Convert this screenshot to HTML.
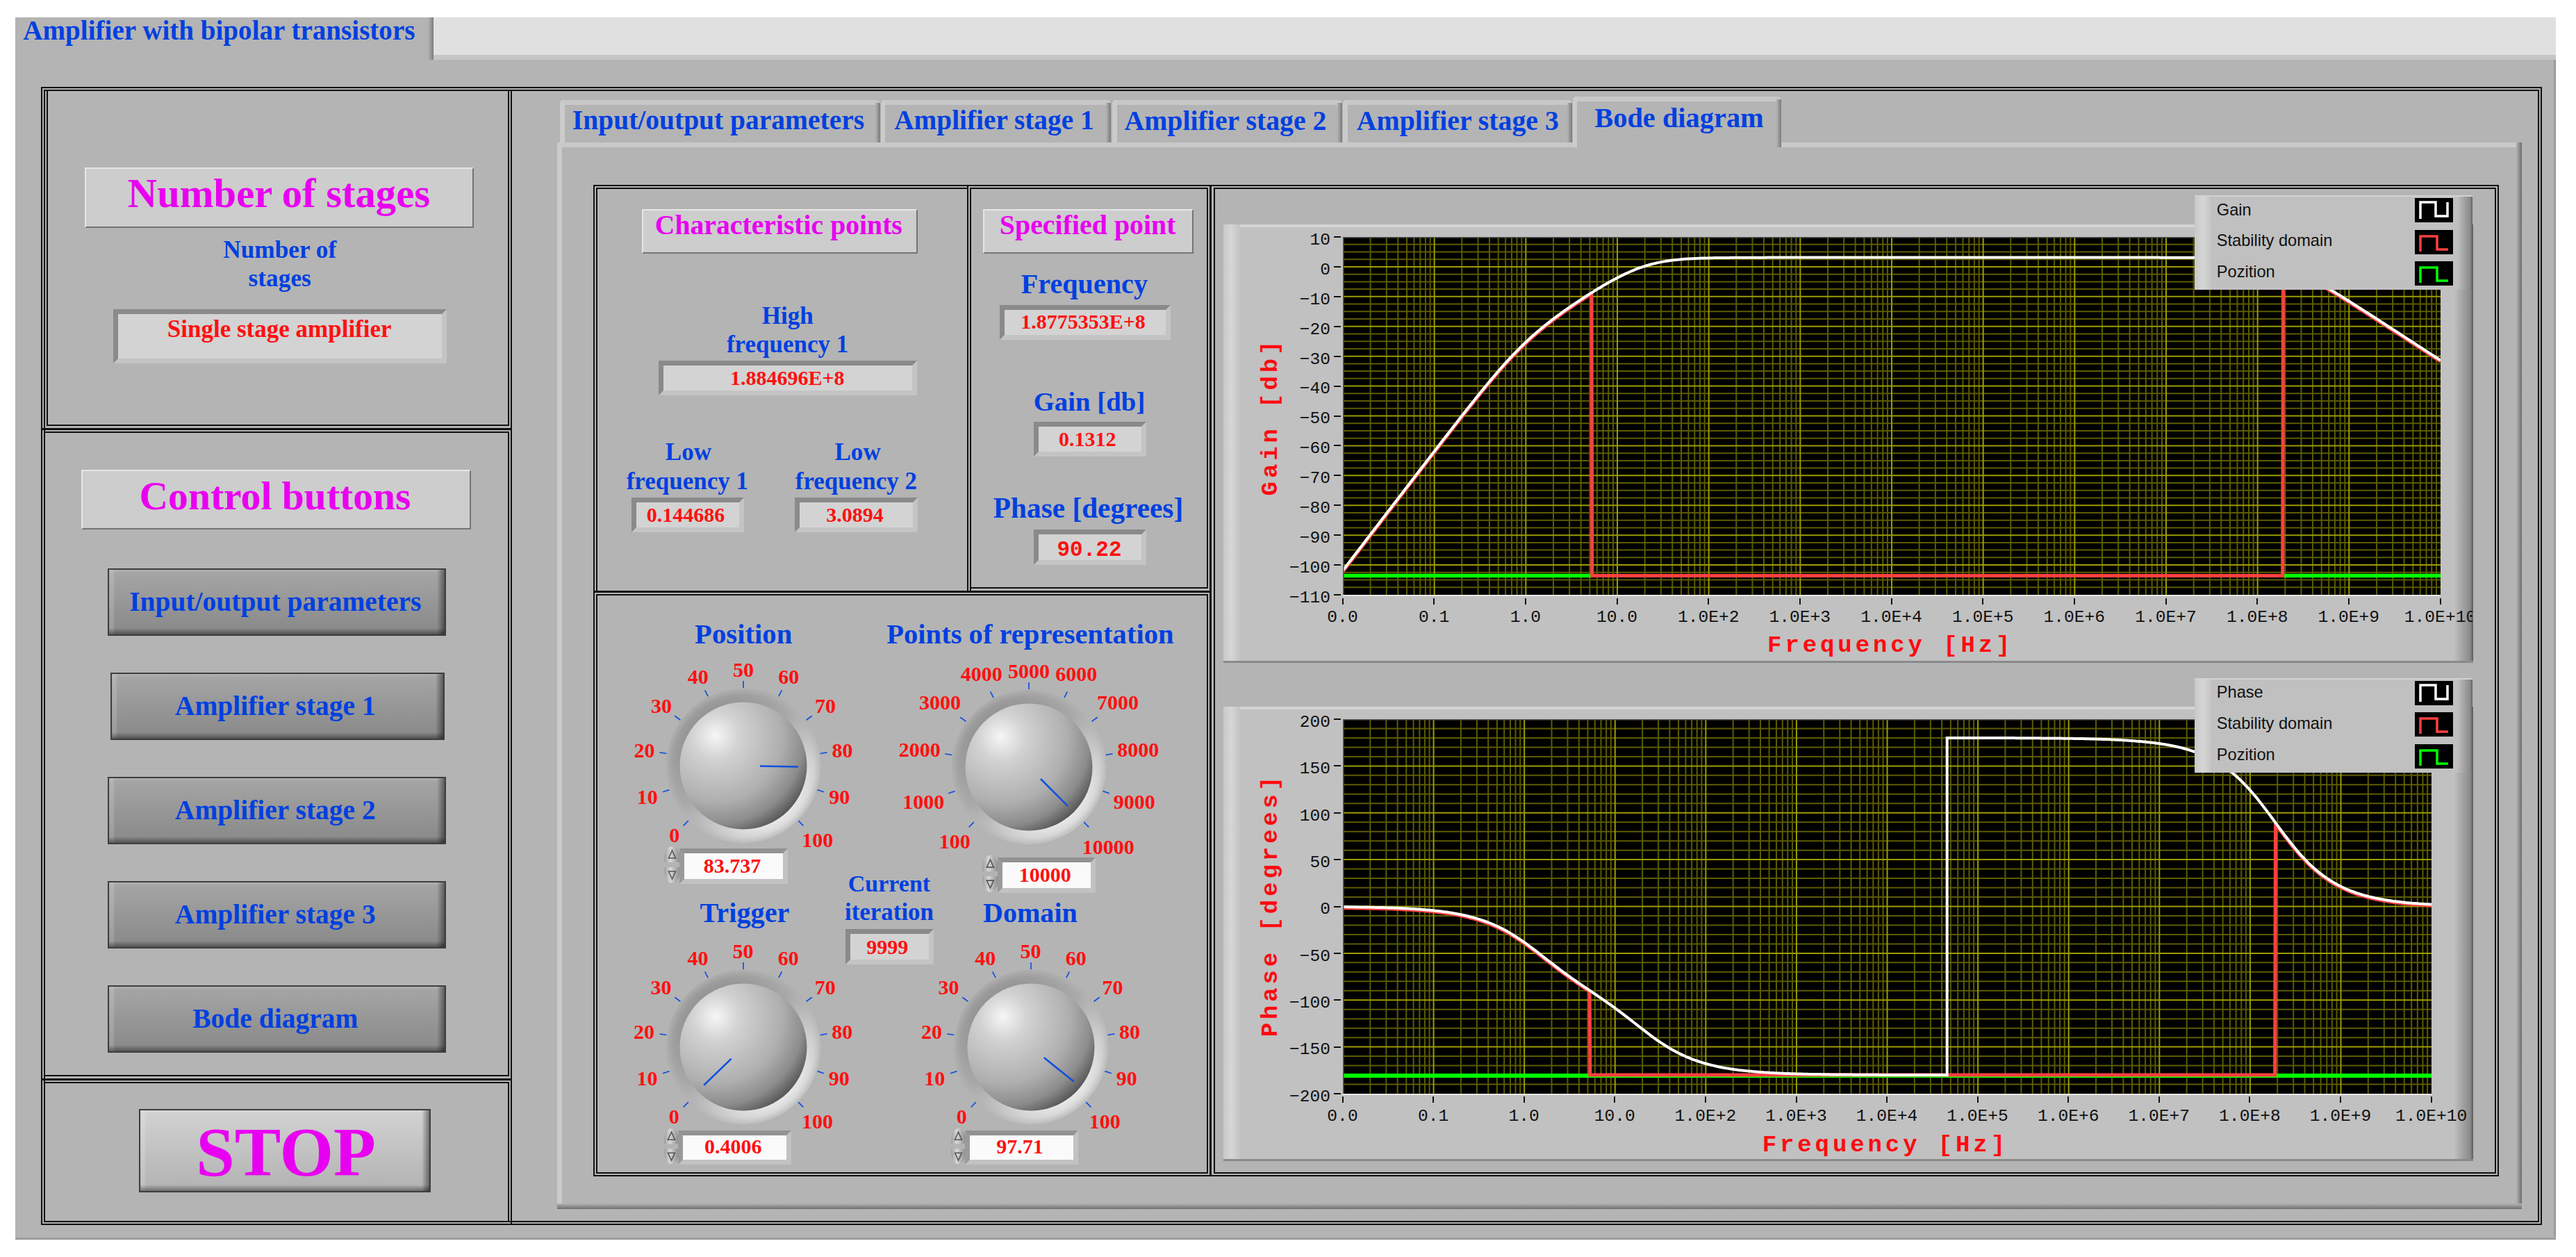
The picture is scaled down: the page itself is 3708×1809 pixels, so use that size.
<!DOCTYPE html><html><head><meta charset="utf-8"><style>html,body{margin:0;padding:0;background:#fff;}#root{position:relative;width:3708px;height:1809px;overflow:hidden;background:#fff;}</style></head><body><div id="root">
<div style="position:absolute;left:22.0px;top:25.0px;width:3657.0px;height:1759.0px;background:#b4b4b4"></div>
<div style="position:absolute;left:3675.0px;top:80.0px;width:4.0px;height:1704.0px;background:linear-gradient(to right,#b4b4b4,#8c8c8c)"></div>
<div style="position:absolute;left:22.0px;top:1780.0px;width:3657.0px;height:4.0px;background:linear-gradient(to bottom,#b4b4b4,#8c8c8c)"></div>
<div style="position:absolute;left:624.0px;top:25.0px;width:3055.0px;height:54.0px;background:#e0e0e0"></div>
<div style="position:absolute;left:624.0px;top:79.0px;width:3055.0px;height:7.0px;background:#c6c6c6"></div>
<div style="position:absolute;left:616.0px;top:25.0px;width:8.0px;height:61.0px;background:linear-gradient(to right,#b4b4b4,#7c7c7c)"></div>
<div style="position:absolute;left:-684.6px;top:22.0px;width:2000px;height:43.3px;line-height:43.3px;text-align:center;white-space:nowrap;font-family:'Liberation Serif', serif;font-weight:bold;font-size:39.1px;color:#0040e0;">Amplifier with bipolar transistors</div>
<div style="position:absolute;left:59.0px;top:125.0px;width:3600.0px;height:2.0px;background:#111"></div>
<div style="position:absolute;left:63.0px;top:129.0px;width:3592.0px;height:2.0px;background:#111"></div>
<div style="position:absolute;left:59.0px;top:1761.0px;width:3600.0px;height:2.0px;background:#111"></div>
<div style="position:absolute;left:63.0px;top:1757.0px;width:3592.0px;height:2.0px;background:#111"></div>
<div style="position:absolute;left:59.0px;top:125.0px;width:2.0px;height:1638.0px;background:#111"></div>
<div style="position:absolute;left:63.0px;top:129.0px;width:2.0px;height:1630.0px;background:#111"></div>
<div style="position:absolute;left:3657.0px;top:125.0px;width:2.0px;height:1638.0px;background:#111"></div>
<div style="position:absolute;left:3653.0px;top:129.0px;width:2.0px;height:1630.0px;background:#111"></div>
<div style="position:absolute;left:67.0px;top:129.0px;width:2.0px;height:484.0px;background:#111"></div>
<div style="position:absolute;left:731.0px;top:129.0px;width:2.0px;height:484.0px;background:#111"></div>
<div style="position:absolute;left:731.0px;top:621.0px;width:2.0px;height:928.0px;background:#111"></div>
<div style="position:absolute;left:731.0px;top:1557.0px;width:2.0px;height:202.0px;background:#111"></div>
<div style="position:absolute;left:735.0px;top:129.0px;width:2.0px;height:1634.0px;background:#111"></div>
<div style="position:absolute;left:67.0px;top:611.0px;width:666.0px;height:2.0px;background:#111"></div>
<div style="position:absolute;left:59.0px;top:615.5px;width:678.0px;height:3.0px;background:#111"></div>
<div style="position:absolute;left:63.0px;top:621.0px;width:670.0px;height:2.0px;background:#111"></div>
<div style="position:absolute;left:63.0px;top:1547.0px;width:670.0px;height:2.0px;background:#111"></div>
<div style="position:absolute;left:59.0px;top:1551.5px;width:678.0px;height:3.0px;background:#111"></div>
<div style="position:absolute;left:63.0px;top:1557.0px;width:670.0px;height:2.0px;background:#111"></div>
<div style="position:absolute;left:122.0px;top:240.5px;width:560.0px;height:87.5px;background:#cdcdcd;border-top:2px solid #e6e6e6;border-left:2px solid #e6e6e6;border-bottom:2px solid #747474;border-right:2px solid #747474;box-sizing:border-box"></div>
<div style="position:absolute;left:-598.6px;top:246.8px;width:2000px;height:64.9px;line-height:64.9px;text-align:center;white-space:nowrap;font-family:'Liberation Serif', serif;font-weight:bold;font-size:58.6px;color:#e800f0;">Number of stages</div>
<div style="position:absolute;left:-597.3px;top:339.9px;width:2000px;height:39.1px;line-height:39.1px;text-align:center;white-space:nowrap;font-family:'Liberation Serif', serif;font-weight:bold;font-size:35.3px;color:#0040e0;">Number of</div>
<div style="position:absolute;left:-597.3px;top:380.8px;width:2000px;height:39.1px;line-height:39.1px;text-align:center;white-space:nowrap;font-family:'Liberation Serif', serif;font-weight:bold;font-size:35.3px;color:#0040e0;">stages</div>
<div style="position:absolute;left:163.0px;top:445.0px;width:480.0px;height:77.5px;box-sizing:border-box;border-style:solid;border-width:7px;border-color:#8a8a8a #c4c4c4 #c4c4c4 #8a8a8a;background:#d3d3d3"></div>
<div style="position:absolute;left:-597.8px;top:455.1px;width:2000px;height:38.8px;line-height:38.8px;text-align:center;white-space:nowrap;font-family:'Liberation Serif', serif;font-weight:bold;font-size:35.0px;color:#ff1010;">Single stage amplifier</div>
<div style="position:absolute;left:117.0px;top:676.0px;width:561.0px;height:86.0px;background:#cdcdcd;border-top:2px solid #e6e6e6;border-left:2px solid #e6e6e6;border-bottom:2px solid #747474;border-right:2px solid #747474;box-sizing:border-box"></div>
<div style="position:absolute;left:-604.0px;top:681.6px;width:2000px;height:63.8px;line-height:63.8px;text-align:center;white-space:nowrap;font-family:'Liberation Serif', serif;font-weight:bold;font-size:57.6px;color:#e800f0;">Control buttons</div>
<div style="position:absolute;left:155.0px;top:818.0px;width:487.0px;height:96.5px;box-sizing:border-box;border:2px solid #3e3e3e;background:linear-gradient(to bottom,#a6a6a6,#888888);overflow:hidden"><div style="position:absolute;left:0;top:0;right:0;height:5px;background:linear-gradient(to bottom,rgba(255,255,255,0.12),rgba(255,255,255,0))"></div><div style="position:absolute;left:0;top:0;bottom:0;width:9px;background:linear-gradient(to right,rgba(255,255,255,0.10),rgba(255,255,255,0.18) 50%,rgba(255,255,255,0))"></div><div style="position:absolute;right:0;top:0;bottom:0;width:11px;background:linear-gradient(to right,rgba(0,0,0,0),rgba(0,0,0,0.45))"></div><div style="position:absolute;left:0;right:0;bottom:0;height:9px;background:linear-gradient(to bottom,rgba(0,0,0,0),rgba(0,0,0,0.4))"></div></div>
<div style="position:absolute;left:-603.7px;top:845.3px;width:2000px;height:43.7px;line-height:43.7px;text-align:center;white-space:nowrap;font-family:'Liberation Serif', serif;font-weight:bold;font-size:39.5px;color:#0040e0;">Input/output parameters</div>
<div style="position:absolute;left:159.0px;top:968.0px;width:480.5px;height:96.5px;box-sizing:border-box;border:2px solid #3e3e3e;background:linear-gradient(to bottom,#a6a6a6,#888888);overflow:hidden"><div style="position:absolute;left:0;top:0;right:0;height:5px;background:linear-gradient(to bottom,rgba(255,255,255,0.12),rgba(255,255,255,0))"></div><div style="position:absolute;left:0;top:0;bottom:0;width:9px;background:linear-gradient(to right,rgba(255,255,255,0.10),rgba(255,255,255,0.18) 50%,rgba(255,255,255,0))"></div><div style="position:absolute;right:0;top:0;bottom:0;width:11px;background:linear-gradient(to right,rgba(0,0,0,0),rgba(0,0,0,0.45))"></div><div style="position:absolute;left:0;right:0;bottom:0;height:9px;background:linear-gradient(to bottom,rgba(0,0,0,0),rgba(0,0,0,0.4))"></div></div>
<div style="position:absolute;left:-603.7px;top:995.3px;width:2000px;height:43.7px;line-height:43.7px;text-align:center;white-space:nowrap;font-family:'Liberation Serif', serif;font-weight:bold;font-size:39.5px;color:#0040e0;">Amplifier stage 1</div>
<div style="position:absolute;left:155.0px;top:1118.0px;width:487.0px;height:96.5px;box-sizing:border-box;border:2px solid #3e3e3e;background:linear-gradient(to bottom,#a6a6a6,#888888);overflow:hidden"><div style="position:absolute;left:0;top:0;right:0;height:5px;background:linear-gradient(to bottom,rgba(255,255,255,0.12),rgba(255,255,255,0))"></div><div style="position:absolute;left:0;top:0;bottom:0;width:9px;background:linear-gradient(to right,rgba(255,255,255,0.10),rgba(255,255,255,0.18) 50%,rgba(255,255,255,0))"></div><div style="position:absolute;right:0;top:0;bottom:0;width:11px;background:linear-gradient(to right,rgba(0,0,0,0),rgba(0,0,0,0.45))"></div><div style="position:absolute;left:0;right:0;bottom:0;height:9px;background:linear-gradient(to bottom,rgba(0,0,0,0),rgba(0,0,0,0.4))"></div></div>
<div style="position:absolute;left:-603.7px;top:1145.3px;width:2000px;height:43.7px;line-height:43.7px;text-align:center;white-space:nowrap;font-family:'Liberation Serif', serif;font-weight:bold;font-size:39.5px;color:#0040e0;">Amplifier stage 2</div>
<div style="position:absolute;left:155.0px;top:1268.0px;width:487.0px;height:96.5px;box-sizing:border-box;border:2px solid #3e3e3e;background:linear-gradient(to bottom,#a6a6a6,#888888);overflow:hidden"><div style="position:absolute;left:0;top:0;right:0;height:5px;background:linear-gradient(to bottom,rgba(255,255,255,0.12),rgba(255,255,255,0))"></div><div style="position:absolute;left:0;top:0;bottom:0;width:9px;background:linear-gradient(to right,rgba(255,255,255,0.10),rgba(255,255,255,0.18) 50%,rgba(255,255,255,0))"></div><div style="position:absolute;right:0;top:0;bottom:0;width:11px;background:linear-gradient(to right,rgba(0,0,0,0),rgba(0,0,0,0.45))"></div><div style="position:absolute;left:0;right:0;bottom:0;height:9px;background:linear-gradient(to bottom,rgba(0,0,0,0),rgba(0,0,0,0.4))"></div></div>
<div style="position:absolute;left:-603.7px;top:1295.3px;width:2000px;height:43.7px;line-height:43.7px;text-align:center;white-space:nowrap;font-family:'Liberation Serif', serif;font-weight:bold;font-size:39.5px;color:#0040e0;">Amplifier stage 3</div>
<div style="position:absolute;left:155.0px;top:1418.0px;width:487.0px;height:96.5px;box-sizing:border-box;border:2px solid #3e3e3e;background:linear-gradient(to bottom,#a6a6a6,#888888);overflow:hidden"><div style="position:absolute;left:0;top:0;right:0;height:5px;background:linear-gradient(to bottom,rgba(255,255,255,0.12),rgba(255,255,255,0))"></div><div style="position:absolute;left:0;top:0;bottom:0;width:9px;background:linear-gradient(to right,rgba(255,255,255,0.10),rgba(255,255,255,0.18) 50%,rgba(255,255,255,0))"></div><div style="position:absolute;right:0;top:0;bottom:0;width:11px;background:linear-gradient(to right,rgba(0,0,0,0),rgba(0,0,0,0.45))"></div><div style="position:absolute;left:0;right:0;bottom:0;height:9px;background:linear-gradient(to bottom,rgba(0,0,0,0),rgba(0,0,0,0.4))"></div></div>
<div style="position:absolute;left:-603.7px;top:1445.3px;width:2000px;height:43.7px;line-height:43.7px;text-align:center;white-space:nowrap;font-family:'Liberation Serif', serif;font-weight:bold;font-size:39.5px;color:#0040e0;">Bode diagram</div>
<div style="position:absolute;left:200.0px;top:1595.5px;width:420.0px;height:120.5px;box-sizing:border-box;border:2px solid #3e3e3e;background:linear-gradient(to bottom,#d2d2d2,#b2b2b2);overflow:hidden"><div style="position:absolute;left:0;top:0;right:0;height:5px;background:linear-gradient(to bottom,rgba(255,255,255,0.12),rgba(255,255,255,0))"></div><div style="position:absolute;left:0;top:0;bottom:0;width:9px;background:linear-gradient(to right,rgba(255,255,255,0.10),rgba(255,255,255,0.18) 50%,rgba(255,255,255,0))"></div><div style="position:absolute;right:0;top:0;bottom:0;width:11px;background:linear-gradient(to right,rgba(0,0,0,0),rgba(0,0,0,0.45))"></div><div style="position:absolute;left:0;right:0;bottom:0;height:9px;background:linear-gradient(to bottom,rgba(0,0,0,0),rgba(0,0,0,0.4))"></div></div>
<div style="position:absolute;left:-588.4px;top:1602.6px;width:2000px;height:110.5px;line-height:110.5px;text-align:center;white-space:nowrap;font-family:'Liberation Serif', serif;font-weight:bold;font-size:99.8px;color:#e800f0;">STOP</div>
<div style="position:absolute;left:802.0px;top:205.0px;width:828.0px;height:1534.0px;background:#b4b4b4"></div>
<div style="position:absolute;left:802.0px;top:205.0px;width:2828.0px;height:1534.0px;background:#b4b4b4"></div>
<div style="position:absolute;left:802.0px;top:205.0px;width:2828.0px;height:7.0px;background:#c8c8c8"></div>
<div style="position:absolute;left:802.0px;top:205.0px;width:7.0px;height:1534.0px;background:#cacaca"></div>
<div style="position:absolute;left:3622.0px;top:205.0px;width:8.0px;height:1534.0px;background:linear-gradient(to right,#b4b4b4,#6e6e6e)"></div>
<div style="position:absolute;left:802.0px;top:1731.5px;width:2828.0px;height:8.0px;background:linear-gradient(to bottom,#b4b4b4,#6e6e6e)"></div>
<div style="position:absolute;left:806.0px;top:144.0px;width:461.0px;height:61.0px;background:#b4b4b4;border-radius:5px 5px 0 0;overflow:hidden"><div style="position:absolute;left:0;top:0;right:0;height:6.5px;background:#c8c8c8"></div><div style="position:absolute;left:0;top:0;bottom:0;width:6.5px;background:#cbcbcb"></div><div style="position:absolute;right:0;top:4px;bottom:0;width:7px;background:linear-gradient(to right,#b4b4b4,#7a7a7a)"></div></div>
<div style="position:absolute;left:1267.6px;top:144.0px;width:331.9px;height:61.0px;background:#b4b4b4;border-radius:5px 5px 0 0;overflow:hidden"><div style="position:absolute;left:0;top:0;right:0;height:6.5px;background:#c8c8c8"></div><div style="position:absolute;left:0;top:0;bottom:0;width:6.5px;background:#cbcbcb"></div><div style="position:absolute;right:0;top:4px;bottom:0;width:7px;background:linear-gradient(to right,#b4b4b4,#7a7a7a)"></div></div>
<div style="position:absolute;left:1601.0px;top:144.0px;width:330.5px;height:61.0px;background:#b4b4b4;border-radius:5px 5px 0 0;overflow:hidden"><div style="position:absolute;left:0;top:0;right:0;height:6.5px;background:#c8c8c8"></div><div style="position:absolute;left:0;top:0;bottom:0;width:6.5px;background:#cbcbcb"></div><div style="position:absolute;right:0;top:4px;bottom:0;width:7px;background:linear-gradient(to right,#b4b4b4,#7a7a7a)"></div></div>
<div style="position:absolute;left:1933.0px;top:144.0px;width:329.5px;height:61.0px;background:#b4b4b4;border-radius:5px 5px 0 0;overflow:hidden"><div style="position:absolute;left:0;top:0;right:0;height:6.5px;background:#c8c8c8"></div><div style="position:absolute;left:0;top:0;bottom:0;width:6.5px;background:#cbcbcb"></div><div style="position:absolute;right:0;top:4px;bottom:0;width:7px;background:linear-gradient(to right,#b4b4b4,#7a7a7a)"></div></div>
<div style="position:absolute;left:2263.5px;top:139.0px;width:300.5px;height:73.0px;background:#b4b4b4;border-radius:5px 5px 0 0;overflow:hidden"><div style="position:absolute;left:0;top:0;right:0;height:6.5px;background:#c8c8c8"></div><div style="position:absolute;left:0;top:0;bottom:0;width:6.5px;background:#cbcbcb"></div><div style="position:absolute;right:0;top:4px;bottom:0;width:7px;background:linear-gradient(to right,#b4b4b4,#7a7a7a)"></div></div>
<div style="position:absolute;left:2270.0px;top:205.0px;width:287.0px;height:8.0px;background:#b4b4b4"></div>
<div style="position:absolute;left:34.0px;top:151.8px;width:2000px;height:43.7px;line-height:43.7px;text-align:center;white-space:nowrap;font-family:'Liberation Serif', serif;font-weight:bold;font-size:39.5px;color:#0040e0;">Input/output parameters</div>
<div style="position:absolute;left:430.9px;top:152.0px;width:2000px;height:43.5px;line-height:43.5px;text-align:center;white-space:nowrap;font-family:'Liberation Serif', serif;font-weight:bold;font-size:39.3px;color:#0040e0;">Amplifier stage 1</div>
<div style="position:absolute;left:764.0px;top:152.0px;width:2000px;height:44.1px;line-height:44.1px;text-align:center;white-space:nowrap;font-family:'Liberation Serif', serif;font-weight:bold;font-size:39.8px;color:#0040e0;">Amplifier stage 2</div>
<div style="position:absolute;left:1098.3px;top:152.0px;width:2000px;height:44.1px;line-height:44.1px;text-align:center;white-space:nowrap;font-family:'Liberation Serif', serif;font-weight:bold;font-size:39.8px;color:#0040e0;">Amplifier stage 3</div>
<div style="position:absolute;left:1417.0px;top:148.0px;width:2000px;height:44.7px;line-height:44.7px;text-align:center;white-space:nowrap;font-family:'Liberation Serif', serif;font-weight:bold;font-size:40.4px;color:#0040e0;">Bode diagram</div>
<div style="position:absolute;left:854.0px;top:265.5px;width:2742.5px;height:2.0px;background:#111"></div>
<div style="position:absolute;left:858.0px;top:270.0px;width:534.0px;height:2.0px;background:#111"></div>
<div style="position:absolute;left:1396.0px;top:270.0px;width:342.0px;height:2.0px;background:#111"></div>
<div style="position:absolute;left:1746.5px;top:270.0px;width:1846.0px;height:2.0px;background:#111"></div>
<div style="position:absolute;left:854.0px;top:265.5px;width:2.0px;height:1427.5px;background:#111"></div>
<div style="position:absolute;left:858.0px;top:270.0px;width:2.0px;height:581.0px;background:#111"></div>
<div style="position:absolute;left:858.0px;top:855.0px;width:2.0px;height:834.0px;background:#111"></div>
<div style="position:absolute;left:1392.0px;top:265.5px;width:2.0px;height:585.5px;background:#111"></div>
<div style="position:absolute;left:1396.0px;top:270.0px;width:2.0px;height:581.0px;background:#111"></div>
<div style="position:absolute;left:1736.5px;top:270.0px;width:2.0px;height:577.0px;background:#111"></div>
<div style="position:absolute;left:1736.5px;top:855.0px;width:2.0px;height:834.0px;background:#111"></div>
<div style="position:absolute;left:1741.0px;top:265.5px;width:3.0px;height:1427.5px;background:#111"></div>
<div style="position:absolute;left:1746.5px;top:270.0px;width:2.0px;height:1419.0px;background:#111"></div>
<div style="position:absolute;left:3590.5px;top:270.0px;width:2.0px;height:1419.0px;background:#111"></div>
<div style="position:absolute;left:3594.5px;top:265.5px;width:2.0px;height:1427.5px;background:#111"></div>
<div style="position:absolute;left:1396.0px;top:845.0px;width:342.0px;height:2.0px;background:#111"></div>
<div style="position:absolute;left:854.0px;top:849.5px;width:890.0px;height:3.0px;background:#111"></div>
<div style="position:absolute;left:858.0px;top:855.0px;width:880.0px;height:2.0px;background:#111"></div>
<div style="position:absolute;left:858.0px;top:1687.0px;width:880.0px;height:2.0px;background:#111"></div>
<div style="position:absolute;left:1746.5px;top:1687.0px;width:1846.0px;height:2.0px;background:#111"></div>
<div style="position:absolute;left:854.0px;top:1691.0px;width:2742.5px;height:2.0px;background:#111"></div>
<div style="position:absolute;left:924.0px;top:300.7px;width:397.0px;height:64.0px;background:#cdcdcd;border-top:2px solid #e6e6e6;border-left:2px solid #e6e6e6;border-bottom:2px solid #747474;border-right:2px solid #747474;box-sizing:border-box"></div>
<div style="position:absolute;left:120.8px;top:302.2px;width:2000px;height:44.0px;line-height:44.0px;text-align:center;white-space:nowrap;font-family:'Liberation Serif', serif;font-weight:bold;font-size:39.7px;color:#e800f0;">Characteristic points</div>
<div style="position:absolute;left:1415.0px;top:300.7px;width:303.0px;height:64.0px;background:#cdcdcd;border-top:2px solid #e6e6e6;border-left:2px solid #e6e6e6;border-bottom:2px solid #747474;border-right:2px solid #747474;box-sizing:border-box"></div>
<div style="position:absolute;left:565.7px;top:302.0px;width:2000px;height:44.2px;line-height:44.2px;text-align:center;white-space:nowrap;font-family:'Liberation Serif', serif;font-weight:bold;font-size:39.9px;color:#e800f0;">Specified point</div>
<div style="position:absolute;left:133.8px;top:435.7px;width:2000px;height:38.9px;line-height:38.9px;text-align:center;white-space:nowrap;font-family:'Liberation Serif', serif;font-weight:bold;font-size:35.1px;color:#0040e0;">High</div>
<div style="position:absolute;left:133.6px;top:477.3px;width:2000px;height:38.8px;line-height:38.8px;text-align:center;white-space:nowrap;font-family:'Liberation Serif', serif;font-weight:bold;font-size:35.0px;color:#0040e0;">frequency 1</div>
<div style="position:absolute;left:948.0px;top:519.0px;width:372.0px;height:50.0px;box-sizing:border-box;border-style:solid;border-width:7px;border-color:#8a8a8a #c4c4c4 #c4c4c4 #8a8a8a;background:#d3d3d3"></div>
<div style="position:absolute;left:133.3px;top:526.6px;width:2000px;height:33.2px;line-height:33.2px;text-align:center;white-space:nowrap;font-family:'Liberation Serif', serif;font-weight:bold;font-size:30.0px;color:#ff1010;">1.884696E+8</div>
<div style="position:absolute;left:-9.0px;top:632.3px;width:2000px;height:38.9px;line-height:38.9px;text-align:center;white-space:nowrap;font-family:'Liberation Serif', serif;font-weight:bold;font-size:35.1px;color:#0040e0;">Low</div>
<div style="position:absolute;left:-10.7px;top:673.6px;width:2000px;height:38.8px;line-height:38.8px;text-align:center;white-space:nowrap;font-family:'Liberation Serif', serif;font-weight:bold;font-size:35.0px;color:#0040e0;">frequency 1</div>
<div style="position:absolute;left:234.6px;top:632.3px;width:2000px;height:38.9px;line-height:38.9px;text-align:center;white-space:nowrap;font-family:'Liberation Serif', serif;font-weight:bold;font-size:35.1px;color:#0040e0;">Low</div>
<div style="position:absolute;left:232.4px;top:673.6px;width:2000px;height:38.8px;line-height:38.8px;text-align:center;white-space:nowrap;font-family:'Liberation Serif', serif;font-weight:bold;font-size:35.0px;color:#0040e0;">frequency 2</div>
<div style="position:absolute;left:908.7px;top:716.0px;width:162.3px;height:49.7px;box-sizing:border-box;border-style:solid;border-width:7px;border-color:#8a8a8a #c4c4c4 #c4c4c4 #8a8a8a;background:#d3d3d3"></div>
<div style="position:absolute;left:1144.0px;top:716.0px;width:176.5px;height:49.7px;box-sizing:border-box;border-style:solid;border-width:7px;border-color:#8a8a8a #c4c4c4 #c4c4c4 #8a8a8a;background:#d3d3d3"></div>
<div style="position:absolute;left:-13.1px;top:724.1px;width:2000px;height:33.2px;line-height:33.2px;text-align:center;white-space:nowrap;font-family:'Liberation Serif', serif;font-weight:bold;font-size:30.0px;color:#ff1010;">0.144686</div>
<div style="position:absolute;left:230.5px;top:724.1px;width:2000px;height:33.2px;line-height:33.2px;text-align:center;white-space:nowrap;font-family:'Liberation Serif', serif;font-weight:bold;font-size:30.0px;color:#ff1010;">3.0894</div>
<div style="position:absolute;left:560.9px;top:387.2px;width:2000px;height:44.5px;line-height:44.5px;text-align:center;white-space:nowrap;font-family:'Liberation Serif', serif;font-weight:bold;font-size:40.2px;color:#0040e0;">Frequency</div>
<div style="position:absolute;left:1439.0px;top:438.5px;width:246.0px;height:50.5px;box-sizing:border-box;border-style:solid;border-width:7px;border-color:#8a8a8a #c4c4c4 #c4c4c4 #8a8a8a;background:#d3d3d3"></div>
<div style="position:absolute;left:559.0px;top:446.0px;width:2000px;height:33.2px;line-height:33.2px;text-align:center;white-space:nowrap;font-family:'Liberation Serif', serif;font-weight:bold;font-size:30.0px;color:#ff1010;">1.8775353E+8</div>
<div style="position:absolute;left:568.0px;top:556.1px;width:2000px;height:43.0px;line-height:43.0px;text-align:center;white-space:nowrap;font-family:'Liberation Serif', serif;font-weight:bold;font-size:38.8px;color:#0040e0;">Gain [db]</div>
<div style="position:absolute;left:1487.6px;top:606.8px;width:162.0px;height:50.2px;box-sizing:border-box;border-style:solid;border-width:7px;border-color:#8a8a8a #c4c4c4 #c4c4c4 #8a8a8a;background:#d3d3d3"></div>
<div style="position:absolute;left:565.2px;top:614.5px;width:2000px;height:33.2px;line-height:33.2px;text-align:center;white-space:nowrap;font-family:'Liberation Serif', serif;font-weight:bold;font-size:30.0px;color:#ff1010;">0.1312</div>
<div style="position:absolute;left:566.5px;top:709.2px;width:2000px;height:45.7px;line-height:45.7px;text-align:center;white-space:nowrap;font-family:'Liberation Serif', serif;font-weight:bold;font-size:41.3px;color:#0040e0;">Phase [degrees]</div>
<div style="position:absolute;left:1488.0px;top:762.0px;width:162.0px;height:51.0px;box-sizing:border-box;border-style:solid;border-width:7px;border-color:#8a8a8a #c4c4c4 #c4c4c4 #8a8a8a;background:#d3d3d3"></div>
<div style="position:absolute;left:568.0px;top:773.6px;width:2000px;height:35.1px;line-height:35.1px;text-align:center;white-space:nowrap;font-family:'Liberation Mono', monospace;font-weight:bold;font-size:31.0px;color:#ff1010;">90.22</div>
<svg style="position:absolute;left:890.0px;top:922.0px" width="360" height="360" viewBox="-180.0 -180.0 360 360"><defs><linearGradient id="kr1" x1="0.15" y1="0.1" x2="0.85" y2="0.9"><stop offset="0" stop-color="#8a8a8a"/><stop offset="0.45" stop-color="#a6a6a6"/><stop offset="0.75" stop-color="#dadada"/><stop offset="1" stop-color="#fcfcfc"/></linearGradient><radialGradient id="kf1" cx="0.5" cy="0.5" r="0.5"><stop offset="0.80" stop-color="#b4b4b4" stop-opacity="0"/><stop offset="0.92" stop-color="#b4b4b4" stop-opacity="0.35"/><stop offset="1" stop-color="#b4b4b4" stop-opacity="0.85"/></radialGradient><radialGradient id="ks1" cx="0.3" cy="0.28" r="0.85" fx="0.28" fy="0.26"><stop offset="0" stop-color="#f6f6f6"/><stop offset="0.22" stop-color="#d2d2d2"/><stop offset="0.6" stop-color="#afafaf"/><stop offset="0.8" stop-color="#8c8c8c"/><stop offset="0.93" stop-color="#5a5a5a"/><stop offset="1" stop-color="#3c3c3c"/></radialGradient></defs><circle cx="0" cy="0" r="110.5" fill="url(#kr1)"/><circle cx="0" cy="0" r="110.5" fill="url(#kf1)"/><circle cx="0" cy="0" r="91.5" fill="url(#ks1)"/><line x1="-79.2" y1="79.2" x2="-86.3" y2="86.3" stroke="#1050e0" stroke-width="1.7"/><line x1="-106.5" y1="34.6" x2="-116.0" y2="37.7" stroke="#1050e0" stroke-width="1.7"/><line x1="-110.6" y1="-17.5" x2="-120.5" y2="-19.1" stroke="#1050e0" stroke-width="1.7"/><line x1="-90.6" y1="-65.8" x2="-98.7" y2="-71.7" stroke="#1050e0" stroke-width="1.7"/><line x1="-50.8" y1="-99.8" x2="-55.4" y2="-108.7" stroke="#1050e0" stroke-width="1.7"/><line x1="0.0" y1="-112.0" x2="0.0" y2="-122.0" stroke="#1050e0" stroke-width="1.7"/><line x1="50.8" y1="-99.8" x2="55.4" y2="-108.7" stroke="#1050e0" stroke-width="1.7"/><line x1="90.6" y1="-65.8" x2="98.7" y2="-71.7" stroke="#1050e0" stroke-width="1.7"/><line x1="110.6" y1="-17.5" x2="120.5" y2="-19.1" stroke="#1050e0" stroke-width="1.7"/><line x1="106.5" y1="34.6" x2="116.0" y2="37.7" stroke="#1050e0" stroke-width="1.7"/><line x1="79.2" y1="79.2" x2="86.3" y2="86.3" stroke="#1050e0" stroke-width="1.7"/><line x1="24.0" y1="0.5" x2="79.0" y2="1.5" stroke="#1050e0" stroke-width="2.6"/></svg>
<div style="position:absolute;left:-29.3px;top:1184.5px;width:2000px;height:33.2px;line-height:33.2px;text-align:center;white-space:nowrap;font-family:'Liberation Serif', serif;font-weight:bold;font-size:30.0px;color:#ff1010;">0</div>
<div style="position:absolute;left:-68.2px;top:1130.2px;width:2000px;height:33.2px;line-height:33.2px;text-align:center;white-space:nowrap;font-family:'Liberation Serif', serif;font-weight:bold;font-size:30.0px;color:#ff1010;">10</div>
<div style="position:absolute;left:-72.6px;top:1062.7px;width:2000px;height:33.2px;line-height:33.2px;text-align:center;white-space:nowrap;font-family:'Liberation Serif', serif;font-weight:bold;font-size:30.0px;color:#ff1010;">20</div>
<div style="position:absolute;left:-48.1px;top:999.4px;width:2000px;height:33.2px;line-height:33.2px;text-align:center;white-space:nowrap;font-family:'Liberation Serif', serif;font-weight:bold;font-size:30.0px;color:#ff1010;">30</div>
<div style="position:absolute;left:4.8px;top:957.2px;width:2000px;height:33.2px;line-height:33.2px;text-align:center;white-space:nowrap;font-family:'Liberation Serif', serif;font-weight:bold;font-size:30.0px;color:#ff1010;">40</div>
<div style="position:absolute;left:70.0px;top:947.3px;width:2000px;height:33.2px;line-height:33.2px;text-align:center;white-space:nowrap;font-family:'Liberation Serif', serif;font-weight:bold;font-size:30.0px;color:#ff1010;">50</div>
<div style="position:absolute;left:135.2px;top:957.2px;width:2000px;height:33.2px;line-height:33.2px;text-align:center;white-space:nowrap;font-family:'Liberation Serif', serif;font-weight:bold;font-size:30.0px;color:#ff1010;">60</div>
<div style="position:absolute;left:188.1px;top:999.4px;width:2000px;height:33.2px;line-height:33.2px;text-align:center;white-space:nowrap;font-family:'Liberation Serif', serif;font-weight:bold;font-size:30.0px;color:#ff1010;">70</div>
<div style="position:absolute;left:212.6px;top:1062.7px;width:2000px;height:33.2px;line-height:33.2px;text-align:center;white-space:nowrap;font-family:'Liberation Serif', serif;font-weight:bold;font-size:30.0px;color:#ff1010;">80</div>
<div style="position:absolute;left:208.2px;top:1130.2px;width:2000px;height:33.2px;line-height:33.2px;text-align:center;white-space:nowrap;font-family:'Liberation Serif', serif;font-weight:bold;font-size:30.0px;color:#ff1010;">90</div>
<div style="position:absolute;left:176.8px;top:1192.0px;width:2000px;height:33.2px;line-height:33.2px;text-align:center;white-space:nowrap;font-family:'Liberation Serif', serif;font-weight:bold;font-size:30.0px;color:#ff1010;">100</div>
<div style="position:absolute;left:70.2px;top:889.7px;width:2000px;height:45.1px;line-height:45.1px;text-align:center;white-space:nowrap;font-family:'Liberation Serif', serif;font-weight:bold;font-size:40.7px;color:#0040e0;">Position</div>
<svg style="position:absolute;left:1301.0px;top:924.0px" width="360" height="360" viewBox="-180.0 -180.0 360 360"><defs><linearGradient id="kr2" x1="0.15" y1="0.1" x2="0.85" y2="0.9"><stop offset="0" stop-color="#8a8a8a"/><stop offset="0.45" stop-color="#a6a6a6"/><stop offset="0.75" stop-color="#dadada"/><stop offset="1" stop-color="#fcfcfc"/></linearGradient><radialGradient id="kf2" cx="0.5" cy="0.5" r="0.5"><stop offset="0.80" stop-color="#b4b4b4" stop-opacity="0"/><stop offset="0.92" stop-color="#b4b4b4" stop-opacity="0.35"/><stop offset="1" stop-color="#b4b4b4" stop-opacity="0.85"/></radialGradient><radialGradient id="ks2" cx="0.3" cy="0.28" r="0.85" fx="0.28" fy="0.26"><stop offset="0" stop-color="#f6f6f6"/><stop offset="0.22" stop-color="#d2d2d2"/><stop offset="0.6" stop-color="#afafaf"/><stop offset="0.8" stop-color="#8c8c8c"/><stop offset="0.93" stop-color="#5a5a5a"/><stop offset="1" stop-color="#3c3c3c"/></radialGradient></defs><circle cx="0" cy="0" r="110.5" fill="url(#kr2)"/><circle cx="0" cy="0" r="110.5" fill="url(#kf2)"/><circle cx="0" cy="0" r="91.5" fill="url(#ks2)"/><line x1="-79.2" y1="79.2" x2="-86.3" y2="86.3" stroke="#1050e0" stroke-width="1.7"/><line x1="-106.5" y1="34.6" x2="-116.0" y2="37.7" stroke="#1050e0" stroke-width="1.7"/><line x1="-110.6" y1="-17.5" x2="-120.5" y2="-19.1" stroke="#1050e0" stroke-width="1.7"/><line x1="-90.6" y1="-65.8" x2="-98.7" y2="-71.7" stroke="#1050e0" stroke-width="1.7"/><line x1="-50.8" y1="-99.8" x2="-55.4" y2="-108.7" stroke="#1050e0" stroke-width="1.7"/><line x1="0.0" y1="-112.0" x2="0.0" y2="-122.0" stroke="#1050e0" stroke-width="1.7"/><line x1="50.8" y1="-99.8" x2="55.4" y2="-108.7" stroke="#1050e0" stroke-width="1.7"/><line x1="90.6" y1="-65.8" x2="98.7" y2="-71.7" stroke="#1050e0" stroke-width="1.7"/><line x1="110.6" y1="-17.5" x2="120.5" y2="-19.1" stroke="#1050e0" stroke-width="1.7"/><line x1="106.5" y1="34.6" x2="116.0" y2="37.7" stroke="#1050e0" stroke-width="1.7"/><line x1="79.2" y1="79.2" x2="86.3" y2="86.3" stroke="#1050e0" stroke-width="1.7"/><line x1="17.0" y1="17.0" x2="55.9" y2="55.9" stroke="#1050e0" stroke-width="2.6"/></svg>
<div style="position:absolute;left:374.2px;top:1194.0px;width:2000px;height:33.2px;line-height:33.2px;text-align:center;white-space:nowrap;font-family:'Liberation Serif', serif;font-weight:bold;font-size:30.0px;color:#ff1010;">100</div>
<div style="position:absolute;left:329.2px;top:1136.6px;width:2000px;height:33.2px;line-height:33.2px;text-align:center;white-space:nowrap;font-family:'Liberation Serif', serif;font-weight:bold;font-size:30.0px;color:#ff1010;">1000</div>
<div style="position:absolute;left:323.8px;top:1062.4px;width:2000px;height:33.2px;line-height:33.2px;text-align:center;white-space:nowrap;font-family:'Liberation Serif', serif;font-weight:bold;font-size:30.0px;color:#ff1010;">2000</div>
<div style="position:absolute;left:353.1px;top:994.3px;width:2000px;height:33.2px;line-height:33.2px;text-align:center;white-space:nowrap;font-family:'Liberation Serif', serif;font-weight:bold;font-size:30.0px;color:#ff1010;">3000</div>
<div style="position:absolute;left:412.7px;top:953.1px;width:2000px;height:33.2px;line-height:33.2px;text-align:center;white-space:nowrap;font-family:'Liberation Serif', serif;font-weight:bold;font-size:30.0px;color:#ff1010;">4000</div>
<div style="position:absolute;left:481.0px;top:949.3px;width:2000px;height:33.2px;line-height:33.2px;text-align:center;white-space:nowrap;font-family:'Liberation Serif', serif;font-weight:bold;font-size:30.0px;color:#ff1010;">5000</div>
<div style="position:absolute;left:549.3px;top:953.1px;width:2000px;height:33.2px;line-height:33.2px;text-align:center;white-space:nowrap;font-family:'Liberation Serif', serif;font-weight:bold;font-size:30.0px;color:#ff1010;">6000</div>
<div style="position:absolute;left:608.9px;top:994.3px;width:2000px;height:33.2px;line-height:33.2px;text-align:center;white-space:nowrap;font-family:'Liberation Serif', serif;font-weight:bold;font-size:30.0px;color:#ff1010;">7000</div>
<div style="position:absolute;left:638.2px;top:1062.4px;width:2000px;height:33.2px;line-height:33.2px;text-align:center;white-space:nowrap;font-family:'Liberation Serif', serif;font-weight:bold;font-size:30.0px;color:#ff1010;">8000</div>
<div style="position:absolute;left:632.8px;top:1136.6px;width:2000px;height:33.2px;line-height:33.2px;text-align:center;white-space:nowrap;font-family:'Liberation Serif', serif;font-weight:bold;font-size:30.0px;color:#ff1010;">9000</div>
<div style="position:absolute;left:595.3px;top:1201.5px;width:2000px;height:33.2px;line-height:33.2px;text-align:center;white-space:nowrap;font-family:'Liberation Serif', serif;font-weight:bold;font-size:30.0px;color:#ff1010;">10000</div>
<div style="position:absolute;left:482.9px;top:889.8px;width:2000px;height:45.0px;line-height:45.0px;text-align:center;white-space:nowrap;font-family:'Liberation Serif', serif;font-weight:bold;font-size:40.6px;color:#0040e0;">Points of representation</div>
<svg style="position:absolute;left:889.6px;top:1327.0px" width="360" height="360" viewBox="-180.0 -180.0 360 360"><defs><linearGradient id="kr3" x1="0.15" y1="0.1" x2="0.85" y2="0.9"><stop offset="0" stop-color="#8a8a8a"/><stop offset="0.45" stop-color="#a6a6a6"/><stop offset="0.75" stop-color="#dadada"/><stop offset="1" stop-color="#fcfcfc"/></linearGradient><radialGradient id="kf3" cx="0.5" cy="0.5" r="0.5"><stop offset="0.80" stop-color="#b4b4b4" stop-opacity="0"/><stop offset="0.92" stop-color="#b4b4b4" stop-opacity="0.35"/><stop offset="1" stop-color="#b4b4b4" stop-opacity="0.85"/></radialGradient><radialGradient id="ks3" cx="0.3" cy="0.28" r="0.85" fx="0.28" fy="0.26"><stop offset="0" stop-color="#f6f6f6"/><stop offset="0.22" stop-color="#d2d2d2"/><stop offset="0.6" stop-color="#afafaf"/><stop offset="0.8" stop-color="#8c8c8c"/><stop offset="0.93" stop-color="#5a5a5a"/><stop offset="1" stop-color="#3c3c3c"/></radialGradient></defs><circle cx="0" cy="0" r="110.5" fill="url(#kr3)"/><circle cx="0" cy="0" r="110.5" fill="url(#kf3)"/><circle cx="0" cy="0" r="91.5" fill="url(#ks3)"/><line x1="-79.2" y1="79.2" x2="-86.3" y2="86.3" stroke="#1050e0" stroke-width="1.7"/><line x1="-106.5" y1="34.6" x2="-116.0" y2="37.7" stroke="#1050e0" stroke-width="1.7"/><line x1="-110.6" y1="-17.5" x2="-120.5" y2="-19.1" stroke="#1050e0" stroke-width="1.7"/><line x1="-90.6" y1="-65.8" x2="-98.7" y2="-71.7" stroke="#1050e0" stroke-width="1.7"/><line x1="-50.8" y1="-99.8" x2="-55.4" y2="-108.7" stroke="#1050e0" stroke-width="1.7"/><line x1="0.0" y1="-112.0" x2="0.0" y2="-122.0" stroke="#1050e0" stroke-width="1.7"/><line x1="50.8" y1="-99.8" x2="55.4" y2="-108.7" stroke="#1050e0" stroke-width="1.7"/><line x1="90.6" y1="-65.8" x2="98.7" y2="-71.7" stroke="#1050e0" stroke-width="1.7"/><line x1="110.6" y1="-17.5" x2="120.5" y2="-19.1" stroke="#1050e0" stroke-width="1.7"/><line x1="106.5" y1="34.6" x2="116.0" y2="37.7" stroke="#1050e0" stroke-width="1.7"/><line x1="79.2" y1="79.2" x2="86.3" y2="86.3" stroke="#1050e0" stroke-width="1.7"/><line x1="-17.3" y1="16.6" x2="-56.9" y2="54.8" stroke="#1050e0" stroke-width="2.6"/></svg>
<div style="position:absolute;left:-29.7px;top:1589.5px;width:2000px;height:33.2px;line-height:33.2px;text-align:center;white-space:nowrap;font-family:'Liberation Serif', serif;font-weight:bold;font-size:30.0px;color:#ff1010;">0</div>
<div style="position:absolute;left:-68.6px;top:1535.2px;width:2000px;height:33.2px;line-height:33.2px;text-align:center;white-space:nowrap;font-family:'Liberation Serif', serif;font-weight:bold;font-size:30.0px;color:#ff1010;">10</div>
<div style="position:absolute;left:-73.0px;top:1467.7px;width:2000px;height:33.2px;line-height:33.2px;text-align:center;white-space:nowrap;font-family:'Liberation Serif', serif;font-weight:bold;font-size:30.0px;color:#ff1010;">20</div>
<div style="position:absolute;left:-48.5px;top:1404.4px;width:2000px;height:33.2px;line-height:33.2px;text-align:center;white-space:nowrap;font-family:'Liberation Serif', serif;font-weight:bold;font-size:30.0px;color:#ff1010;">30</div>
<div style="position:absolute;left:4.4px;top:1362.2px;width:2000px;height:33.2px;line-height:33.2px;text-align:center;white-space:nowrap;font-family:'Liberation Serif', serif;font-weight:bold;font-size:30.0px;color:#ff1010;">40</div>
<div style="position:absolute;left:69.6px;top:1352.3px;width:2000px;height:33.2px;line-height:33.2px;text-align:center;white-space:nowrap;font-family:'Liberation Serif', serif;font-weight:bold;font-size:30.0px;color:#ff1010;">50</div>
<div style="position:absolute;left:134.8px;top:1362.2px;width:2000px;height:33.2px;line-height:33.2px;text-align:center;white-space:nowrap;font-family:'Liberation Serif', serif;font-weight:bold;font-size:30.0px;color:#ff1010;">60</div>
<div style="position:absolute;left:187.7px;top:1404.4px;width:2000px;height:33.2px;line-height:33.2px;text-align:center;white-space:nowrap;font-family:'Liberation Serif', serif;font-weight:bold;font-size:30.0px;color:#ff1010;">70</div>
<div style="position:absolute;left:212.2px;top:1467.7px;width:2000px;height:33.2px;line-height:33.2px;text-align:center;white-space:nowrap;font-family:'Liberation Serif', serif;font-weight:bold;font-size:30.0px;color:#ff1010;">80</div>
<div style="position:absolute;left:207.8px;top:1535.2px;width:2000px;height:33.2px;line-height:33.2px;text-align:center;white-space:nowrap;font-family:'Liberation Serif', serif;font-weight:bold;font-size:30.0px;color:#ff1010;">90</div>
<div style="position:absolute;left:176.4px;top:1597.0px;width:2000px;height:33.2px;line-height:33.2px;text-align:center;white-space:nowrap;font-family:'Liberation Serif', serif;font-weight:bold;font-size:30.0px;color:#ff1010;">100</div>
<div style="position:absolute;left:72.0px;top:1291.7px;width:2000px;height:44.6px;line-height:44.6px;text-align:center;white-space:nowrap;font-family:'Liberation Serif', serif;font-weight:bold;font-size:40.3px;color:#0040e0;">Trigger</div>
<svg style="position:absolute;left:1303.5px;top:1327.0px" width="360" height="360" viewBox="-180.0 -180.0 360 360"><defs><linearGradient id="kr4" x1="0.15" y1="0.1" x2="0.85" y2="0.9"><stop offset="0" stop-color="#8a8a8a"/><stop offset="0.45" stop-color="#a6a6a6"/><stop offset="0.75" stop-color="#dadada"/><stop offset="1" stop-color="#fcfcfc"/></linearGradient><radialGradient id="kf4" cx="0.5" cy="0.5" r="0.5"><stop offset="0.80" stop-color="#b4b4b4" stop-opacity="0"/><stop offset="0.92" stop-color="#b4b4b4" stop-opacity="0.35"/><stop offset="1" stop-color="#b4b4b4" stop-opacity="0.85"/></radialGradient><radialGradient id="ks4" cx="0.3" cy="0.28" r="0.85" fx="0.28" fy="0.26"><stop offset="0" stop-color="#f6f6f6"/><stop offset="0.22" stop-color="#d2d2d2"/><stop offset="0.6" stop-color="#afafaf"/><stop offset="0.8" stop-color="#8c8c8c"/><stop offset="0.93" stop-color="#5a5a5a"/><stop offset="1" stop-color="#3c3c3c"/></radialGradient></defs><circle cx="0" cy="0" r="110.5" fill="url(#kr4)"/><circle cx="0" cy="0" r="110.5" fill="url(#kf4)"/><circle cx="0" cy="0" r="91.5" fill="url(#ks4)"/><line x1="-79.2" y1="79.2" x2="-86.3" y2="86.3" stroke="#1050e0" stroke-width="1.7"/><line x1="-106.5" y1="34.6" x2="-116.0" y2="37.7" stroke="#1050e0" stroke-width="1.7"/><line x1="-110.6" y1="-17.5" x2="-120.5" y2="-19.1" stroke="#1050e0" stroke-width="1.7"/><line x1="-90.6" y1="-65.8" x2="-98.7" y2="-71.7" stroke="#1050e0" stroke-width="1.7"/><line x1="-50.8" y1="-99.8" x2="-55.4" y2="-108.7" stroke="#1050e0" stroke-width="1.7"/><line x1="0.0" y1="-112.0" x2="0.0" y2="-122.0" stroke="#1050e0" stroke-width="1.7"/><line x1="50.8" y1="-99.8" x2="55.4" y2="-108.7" stroke="#1050e0" stroke-width="1.7"/><line x1="90.6" y1="-65.8" x2="98.7" y2="-71.7" stroke="#1050e0" stroke-width="1.7"/><line x1="110.6" y1="-17.5" x2="120.5" y2="-19.1" stroke="#1050e0" stroke-width="1.7"/><line x1="106.5" y1="34.6" x2="116.0" y2="37.7" stroke="#1050e0" stroke-width="1.7"/><line x1="79.2" y1="79.2" x2="86.3" y2="86.3" stroke="#1050e0" stroke-width="1.7"/><line x1="18.7" y1="15.0" x2="61.6" y2="49.5" stroke="#1050e0" stroke-width="2.6"/></svg>
<div style="position:absolute;left:384.2px;top:1589.5px;width:2000px;height:33.2px;line-height:33.2px;text-align:center;white-space:nowrap;font-family:'Liberation Serif', serif;font-weight:bold;font-size:30.0px;color:#ff1010;">0</div>
<div style="position:absolute;left:345.3px;top:1535.2px;width:2000px;height:33.2px;line-height:33.2px;text-align:center;white-space:nowrap;font-family:'Liberation Serif', serif;font-weight:bold;font-size:30.0px;color:#ff1010;">10</div>
<div style="position:absolute;left:340.9px;top:1467.7px;width:2000px;height:33.2px;line-height:33.2px;text-align:center;white-space:nowrap;font-family:'Liberation Serif', serif;font-weight:bold;font-size:30.0px;color:#ff1010;">20</div>
<div style="position:absolute;left:365.4px;top:1404.4px;width:2000px;height:33.2px;line-height:33.2px;text-align:center;white-space:nowrap;font-family:'Liberation Serif', serif;font-weight:bold;font-size:30.0px;color:#ff1010;">30</div>
<div style="position:absolute;left:418.3px;top:1362.2px;width:2000px;height:33.2px;line-height:33.2px;text-align:center;white-space:nowrap;font-family:'Liberation Serif', serif;font-weight:bold;font-size:30.0px;color:#ff1010;">40</div>
<div style="position:absolute;left:483.5px;top:1352.3px;width:2000px;height:33.2px;line-height:33.2px;text-align:center;white-space:nowrap;font-family:'Liberation Serif', serif;font-weight:bold;font-size:30.0px;color:#ff1010;">50</div>
<div style="position:absolute;left:548.7px;top:1362.2px;width:2000px;height:33.2px;line-height:33.2px;text-align:center;white-space:nowrap;font-family:'Liberation Serif', serif;font-weight:bold;font-size:30.0px;color:#ff1010;">60</div>
<div style="position:absolute;left:601.6px;top:1404.4px;width:2000px;height:33.2px;line-height:33.2px;text-align:center;white-space:nowrap;font-family:'Liberation Serif', serif;font-weight:bold;font-size:30.0px;color:#ff1010;">70</div>
<div style="position:absolute;left:626.1px;top:1467.7px;width:2000px;height:33.2px;line-height:33.2px;text-align:center;white-space:nowrap;font-family:'Liberation Serif', serif;font-weight:bold;font-size:30.0px;color:#ff1010;">80</div>
<div style="position:absolute;left:621.7px;top:1535.2px;width:2000px;height:33.2px;line-height:33.2px;text-align:center;white-space:nowrap;font-family:'Liberation Serif', serif;font-weight:bold;font-size:30.0px;color:#ff1010;">90</div>
<div style="position:absolute;left:590.3px;top:1597.0px;width:2000px;height:33.2px;line-height:33.2px;text-align:center;white-space:nowrap;font-family:'Liberation Serif', serif;font-weight:bold;font-size:30.0px;color:#ff1010;">100</div>
<div style="position:absolute;left:482.9px;top:1291.9px;width:2000px;height:44.4px;line-height:44.4px;text-align:center;white-space:nowrap;font-family:'Liberation Serif', serif;font-weight:bold;font-size:40.1px;color:#0040e0;">Domain</div>
<svg style="position:absolute;left:956.0px;top:1217.8px" width="23.0" height="53.0" viewBox="0 0 23.0 53.0"><defs><linearGradient id="sp9560" x1="0" y1="0" x2="1" y2="0"><stop offset="0" stop-color="#9c9c9c"/><stop offset="0.4" stop-color="#d8d8d8"/><stop offset="1" stop-color="#8a8a8a"/></linearGradient></defs><path d="M0 23.0 Q0 0 11.5 0 Q23.0 0 23.0 23.0 Z" fill="url(#sp9560)"/><path d="M0 30.0 Q0 53.0 11.5 53.0 Q23.0 53.0 23.0 30.0 Z" fill="url(#sp9560)"/><path d="M6.5 17.0 L11.5 6.0 L16.5 17.0 Z" fill="none" stroke="#555" stroke-width="1.6"/><path d="M6.5 36.0 L11.5 47.0 L16.5 36.0 Z" fill="none" stroke="#555" stroke-width="1.6"/></svg>
<div style="position:absolute;left:978.0px;top:1220.8px;width:155.5px;height:51.0px;box-sizing:border-box;border-style:solid;border-width:7px;border-color:#929292 #c2c2c2 #c2c2c2 #9a9a9a;background:#fafafa"></div>
<div style="position:absolute;left:54.0px;top:1228.7px;width:2000px;height:33.2px;line-height:33.2px;text-align:center;white-space:nowrap;font-family:'Liberation Serif', serif;font-weight:bold;font-size:30.0px;color:#ff1010;">83.737</div>
<svg style="position:absolute;left:1413.7px;top:1230.5px" width="22.9" height="53.2" viewBox="0 0 22.9 53.2"><defs><linearGradient id="sp14137" x1="0" y1="0" x2="1" y2="0"><stop offset="0" stop-color="#9c9c9c"/><stop offset="0.4" stop-color="#d8d8d8"/><stop offset="1" stop-color="#8a8a8a"/></linearGradient></defs><path d="M0 23.1 Q0 0 11.4 0 Q22.9 0 22.9 23.1 Z" fill="url(#sp14137)"/><path d="M0 30.1 Q0 53.2 11.4 53.2 Q22.9 53.2 22.9 30.1 Z" fill="url(#sp14137)"/><path d="M6.4 17.1 L11.4 6.1 L16.4 17.1 Z" fill="none" stroke="#555" stroke-width="1.6"/><path d="M6.4 36.1 L11.4 47.1 L16.4 36.1 Z" fill="none" stroke="#555" stroke-width="1.6"/></svg>
<div style="position:absolute;left:1435.6px;top:1233.5px;width:141.0px;height:51.2px;box-sizing:border-box;border-style:solid;border-width:7px;border-color:#929292 #c2c2c2 #c2c2c2 #9a9a9a;background:#fafafa"></div>
<div style="position:absolute;left:504.3px;top:1241.6px;width:2000px;height:33.2px;line-height:33.2px;text-align:center;white-space:nowrap;font-family:'Liberation Serif', serif;font-weight:bold;font-size:30.0px;color:#ff1010;">10000</div>
<svg style="position:absolute;left:956.0px;top:1624.0px" width="21.0" height="51.4" viewBox="0 0 21.0 51.4"><defs><linearGradient id="sp9560" x1="0" y1="0" x2="1" y2="0"><stop offset="0" stop-color="#9c9c9c"/><stop offset="0.4" stop-color="#d8d8d8"/><stop offset="1" stop-color="#8a8a8a"/></linearGradient></defs><path d="M0 22.2 Q0 0 10.5 0 Q21.0 0 21.0 22.2 Z" fill="url(#sp9560)"/><path d="M0 29.2 Q0 51.4 10.5 51.4 Q21.0 51.4 21.0 29.2 Z" fill="url(#sp9560)"/><path d="M5.5 16.2 L10.5 5.2 L15.5 16.2 Z" fill="none" stroke="#555" stroke-width="1.6"/><path d="M5.5 35.2 L10.5 46.2 L15.5 35.2 Z" fill="none" stroke="#555" stroke-width="1.6"/></svg>
<div style="position:absolute;left:976.0px;top:1627.0px;width:163.0px;height:49.4px;box-sizing:border-box;border-style:solid;border-width:7px;border-color:#929292 #c2c2c2 #c2c2c2 #9a9a9a;background:#fafafa"></div>
<div style="position:absolute;left:55.3px;top:1633.3px;width:2000px;height:33.2px;line-height:33.2px;text-align:center;white-space:nowrap;font-family:'Liberation Serif', serif;font-weight:bold;font-size:30.0px;color:#ff1010;">0.4006</div>
<svg style="position:absolute;left:1369.0px;top:1624.0px" width="21.0" height="51.4" viewBox="0 0 21.0 51.4"><defs><linearGradient id="sp13690" x1="0" y1="0" x2="1" y2="0"><stop offset="0" stop-color="#9c9c9c"/><stop offset="0.4" stop-color="#d8d8d8"/><stop offset="1" stop-color="#8a8a8a"/></linearGradient></defs><path d="M0 22.2 Q0 0 10.5 0 Q21.0 0 21.0 22.2 Z" fill="url(#sp13690)"/><path d="M0 29.2 Q0 51.4 10.5 51.4 Q21.0 51.4 21.0 29.2 Z" fill="url(#sp13690)"/><path d="M5.5 16.2 L10.5 5.2 L15.5 16.2 Z" fill="none" stroke="#555" stroke-width="1.6"/><path d="M5.5 35.2 L10.5 46.2 L15.5 35.2 Z" fill="none" stroke="#555" stroke-width="1.6"/></svg>
<div style="position:absolute;left:1389.0px;top:1627.0px;width:163.0px;height:49.4px;box-sizing:border-box;border-style:solid;border-width:7px;border-color:#929292 #c2c2c2 #c2c2c2 #9a9a9a;background:#fafafa"></div>
<div style="position:absolute;left:468.0px;top:1633.3px;width:2000px;height:33.2px;line-height:33.2px;text-align:center;white-space:nowrap;font-family:'Liberation Serif', serif;font-weight:bold;font-size:30.0px;color:#ff1010;">97.71</div>
<div style="position:absolute;left:280.0px;top:1253.4px;width:2000px;height:37.7px;line-height:37.7px;text-align:center;white-space:nowrap;font-family:'Liberation Serif', serif;font-weight:bold;font-size:34.0px;color:#0040e0;">Current</div>
<div style="position:absolute;left:280.0px;top:1293.9px;width:2000px;height:38.6px;line-height:38.6px;text-align:center;white-space:nowrap;font-family:'Liberation Serif', serif;font-weight:bold;font-size:34.9px;color:#0040e0;">iteration</div>
<div style="position:absolute;left:1217.0px;top:1337.0px;width:127.0px;height:51.0px;box-sizing:border-box;border-style:solid;border-width:7px;border-color:#8a8a8a #c4c4c4 #c4c4c4 #8a8a8a;background:#d3d3d3"></div>
<div style="position:absolute;left:277.3px;top:1345.9px;width:2000px;height:33.2px;line-height:33.2px;text-align:center;white-space:nowrap;font-family:'Liberation Serif', serif;font-weight:bold;font-size:30.0px;color:#ff1010;">9999</div>
<div style="position:absolute;left:1761.0px;top:322.5px;width:1798.6px;height:631.5px;background:#c1c1c1"><div style="position:absolute;left:0;top:0;right:0;height:4px;background:#d4d4d4"></div><div style="position:absolute;left:0;top:0;bottom:0;width:24px;background:linear-gradient(to right,#c8c8c8,#d6d6d6 45%,#c4c4c4)"></div><div style="position:absolute;right:0;top:0;bottom:0;width:28px;background:linear-gradient(to right,#c1c1c1,#8a8a8a 85%,#5a5a5a)"></div><div style="position:absolute;left:0;right:0;bottom:0;height:3px;background:#8a8a8a"></div></div>
<svg style="position:absolute;left:1932.5px;top:341.0px" width="1580.0" height="515.0" viewBox="0 0 1580.0 515.0"><rect x="0" y="0" width="1580.0" height="515.0" fill="#000"/><line x1="39.64" y1="0" x2="39.64" y2="515.0" stroke="#5c5c00" stroke-width="2"/><line x1="62.82" y1="0" x2="62.82" y2="515.0" stroke="#5c5c00" stroke-width="2"/><line x1="79.27" y1="0" x2="79.27" y2="515.0" stroke="#5c5c00" stroke-width="2"/><line x1="92.03" y1="0" x2="92.03" y2="515.0" stroke="#5c5c00" stroke-width="2"/><line x1="102.46" y1="0" x2="102.46" y2="515.0" stroke="#5c5c00" stroke-width="2"/><line x1="111.27" y1="0" x2="111.27" y2="515.0" stroke="#5c5c00" stroke-width="2"/><line x1="118.91" y1="0" x2="118.91" y2="515.0" stroke="#5c5c00" stroke-width="2"/><line x1="125.64" y1="0" x2="125.64" y2="515.0" stroke="#5c5c00" stroke-width="2"/><line x1="171.30" y1="0" x2="171.30" y2="515.0" stroke="#5c5c00" stroke-width="2"/><line x1="194.49" y1="0" x2="194.49" y2="515.0" stroke="#5c5c00" stroke-width="2"/><line x1="210.94" y1="0" x2="210.94" y2="515.0" stroke="#5c5c00" stroke-width="2"/><line x1="223.70" y1="0" x2="223.70" y2="515.0" stroke="#5c5c00" stroke-width="2"/><line x1="234.12" y1="0" x2="234.12" y2="515.0" stroke="#5c5c00" stroke-width="2"/><line x1="242.94" y1="0" x2="242.94" y2="515.0" stroke="#5c5c00" stroke-width="2"/><line x1="250.57" y1="0" x2="250.57" y2="515.0" stroke="#5c5c00" stroke-width="2"/><line x1="257.31" y1="0" x2="257.31" y2="515.0" stroke="#5c5c00" stroke-width="2"/><line x1="302.97" y1="0" x2="302.97" y2="515.0" stroke="#5c5c00" stroke-width="2"/><line x1="326.15" y1="0" x2="326.15" y2="515.0" stroke="#5c5c00" stroke-width="2"/><line x1="342.60" y1="0" x2="342.60" y2="515.0" stroke="#5c5c00" stroke-width="2"/><line x1="355.36" y1="0" x2="355.36" y2="515.0" stroke="#5c5c00" stroke-width="2"/><line x1="365.79" y1="0" x2="365.79" y2="515.0" stroke="#5c5c00" stroke-width="2"/><line x1="374.60" y1="0" x2="374.60" y2="515.0" stroke="#5c5c00" stroke-width="2"/><line x1="382.24" y1="0" x2="382.24" y2="515.0" stroke="#5c5c00" stroke-width="2"/><line x1="388.98" y1="0" x2="388.98" y2="515.0" stroke="#5c5c00" stroke-width="2"/><line x1="434.64" y1="0" x2="434.64" y2="515.0" stroke="#5c5c00" stroke-width="2"/><line x1="457.82" y1="0" x2="457.82" y2="515.0" stroke="#5c5c00" stroke-width="2"/><line x1="474.27" y1="0" x2="474.27" y2="515.0" stroke="#5c5c00" stroke-width="2"/><line x1="487.03" y1="0" x2="487.03" y2="515.0" stroke="#5c5c00" stroke-width="2"/><line x1="497.46" y1="0" x2="497.46" y2="515.0" stroke="#5c5c00" stroke-width="2"/><line x1="506.27" y1="0" x2="506.27" y2="515.0" stroke="#5c5c00" stroke-width="2"/><line x1="513.91" y1="0" x2="513.91" y2="515.0" stroke="#5c5c00" stroke-width="2"/><line x1="520.64" y1="0" x2="520.64" y2="515.0" stroke="#5c5c00" stroke-width="2"/><line x1="566.30" y1="0" x2="566.30" y2="515.0" stroke="#5c5c00" stroke-width="2"/><line x1="589.49" y1="0" x2="589.49" y2="515.0" stroke="#5c5c00" stroke-width="2"/><line x1="605.94" y1="0" x2="605.94" y2="515.0" stroke="#5c5c00" stroke-width="2"/><line x1="618.70" y1="0" x2="618.70" y2="515.0" stroke="#5c5c00" stroke-width="2"/><line x1="629.12" y1="0" x2="629.12" y2="515.0" stroke="#5c5c00" stroke-width="2"/><line x1="637.94" y1="0" x2="637.94" y2="515.0" stroke="#5c5c00" stroke-width="2"/><line x1="645.57" y1="0" x2="645.57" y2="515.0" stroke="#5c5c00" stroke-width="2"/><line x1="652.31" y1="0" x2="652.31" y2="515.0" stroke="#5c5c00" stroke-width="2"/><line x1="697.97" y1="0" x2="697.97" y2="515.0" stroke="#5c5c00" stroke-width="2"/><line x1="721.15" y1="0" x2="721.15" y2="515.0" stroke="#5c5c00" stroke-width="2"/><line x1="737.60" y1="0" x2="737.60" y2="515.0" stroke="#5c5c00" stroke-width="2"/><line x1="750.36" y1="0" x2="750.36" y2="515.0" stroke="#5c5c00" stroke-width="2"/><line x1="760.79" y1="0" x2="760.79" y2="515.0" stroke="#5c5c00" stroke-width="2"/><line x1="769.60" y1="0" x2="769.60" y2="515.0" stroke="#5c5c00" stroke-width="2"/><line x1="777.24" y1="0" x2="777.24" y2="515.0" stroke="#5c5c00" stroke-width="2"/><line x1="783.98" y1="0" x2="783.98" y2="515.0" stroke="#5c5c00" stroke-width="2"/><line x1="829.64" y1="0" x2="829.64" y2="515.0" stroke="#5c5c00" stroke-width="2"/><line x1="852.82" y1="0" x2="852.82" y2="515.0" stroke="#5c5c00" stroke-width="2"/><line x1="869.27" y1="0" x2="869.27" y2="515.0" stroke="#5c5c00" stroke-width="2"/><line x1="882.03" y1="0" x2="882.03" y2="515.0" stroke="#5c5c00" stroke-width="2"/><line x1="892.46" y1="0" x2="892.46" y2="515.0" stroke="#5c5c00" stroke-width="2"/><line x1="901.27" y1="0" x2="901.27" y2="515.0" stroke="#5c5c00" stroke-width="2"/><line x1="908.91" y1="0" x2="908.91" y2="515.0" stroke="#5c5c00" stroke-width="2"/><line x1="915.64" y1="0" x2="915.64" y2="515.0" stroke="#5c5c00" stroke-width="2"/><line x1="961.30" y1="0" x2="961.30" y2="515.0" stroke="#5c5c00" stroke-width="2"/><line x1="984.49" y1="0" x2="984.49" y2="515.0" stroke="#5c5c00" stroke-width="2"/><line x1="1000.94" y1="0" x2="1000.94" y2="515.0" stroke="#5c5c00" stroke-width="2"/><line x1="1013.70" y1="0" x2="1013.70" y2="515.0" stroke="#5c5c00" stroke-width="2"/><line x1="1024.12" y1="0" x2="1024.12" y2="515.0" stroke="#5c5c00" stroke-width="2"/><line x1="1032.94" y1="0" x2="1032.94" y2="515.0" stroke="#5c5c00" stroke-width="2"/><line x1="1040.57" y1="0" x2="1040.57" y2="515.0" stroke="#5c5c00" stroke-width="2"/><line x1="1047.31" y1="0" x2="1047.31" y2="515.0" stroke="#5c5c00" stroke-width="2"/><line x1="1092.97" y1="0" x2="1092.97" y2="515.0" stroke="#5c5c00" stroke-width="2"/><line x1="1116.15" y1="0" x2="1116.15" y2="515.0" stroke="#5c5c00" stroke-width="2"/><line x1="1132.60" y1="0" x2="1132.60" y2="515.0" stroke="#5c5c00" stroke-width="2"/><line x1="1145.36" y1="0" x2="1145.36" y2="515.0" stroke="#5c5c00" stroke-width="2"/><line x1="1155.79" y1="0" x2="1155.79" y2="515.0" stroke="#5c5c00" stroke-width="2"/><line x1="1164.60" y1="0" x2="1164.60" y2="515.0" stroke="#5c5c00" stroke-width="2"/><line x1="1172.24" y1="0" x2="1172.24" y2="515.0" stroke="#5c5c00" stroke-width="2"/><line x1="1178.98" y1="0" x2="1178.98" y2="515.0" stroke="#5c5c00" stroke-width="2"/><line x1="1224.64" y1="0" x2="1224.64" y2="515.0" stroke="#5c5c00" stroke-width="2"/><line x1="1247.82" y1="0" x2="1247.82" y2="515.0" stroke="#5c5c00" stroke-width="2"/><line x1="1264.27" y1="0" x2="1264.27" y2="515.0" stroke="#5c5c00" stroke-width="2"/><line x1="1277.03" y1="0" x2="1277.03" y2="515.0" stroke="#5c5c00" stroke-width="2"/><line x1="1287.46" y1="0" x2="1287.46" y2="515.0" stroke="#5c5c00" stroke-width="2"/><line x1="1296.27" y1="0" x2="1296.27" y2="515.0" stroke="#5c5c00" stroke-width="2"/><line x1="1303.91" y1="0" x2="1303.91" y2="515.0" stroke="#5c5c00" stroke-width="2"/><line x1="1310.64" y1="0" x2="1310.64" y2="515.0" stroke="#5c5c00" stroke-width="2"/><line x1="1356.30" y1="0" x2="1356.30" y2="515.0" stroke="#5c5c00" stroke-width="2"/><line x1="1379.49" y1="0" x2="1379.49" y2="515.0" stroke="#5c5c00" stroke-width="2"/><line x1="1395.94" y1="0" x2="1395.94" y2="515.0" stroke="#5c5c00" stroke-width="2"/><line x1="1408.70" y1="0" x2="1408.70" y2="515.0" stroke="#5c5c00" stroke-width="2"/><line x1="1419.12" y1="0" x2="1419.12" y2="515.0" stroke="#5c5c00" stroke-width="2"/><line x1="1427.94" y1="0" x2="1427.94" y2="515.0" stroke="#5c5c00" stroke-width="2"/><line x1="1435.57" y1="0" x2="1435.57" y2="515.0" stroke="#5c5c00" stroke-width="2"/><line x1="1442.31" y1="0" x2="1442.31" y2="515.0" stroke="#5c5c00" stroke-width="2"/><line x1="1487.97" y1="0" x2="1487.97" y2="515.0" stroke="#5c5c00" stroke-width="2"/><line x1="1511.15" y1="0" x2="1511.15" y2="515.0" stroke="#5c5c00" stroke-width="2"/><line x1="1527.60" y1="0" x2="1527.60" y2="515.0" stroke="#5c5c00" stroke-width="2"/><line x1="1540.36" y1="0" x2="1540.36" y2="515.0" stroke="#5c5c00" stroke-width="2"/><line x1="1550.79" y1="0" x2="1550.79" y2="515.0" stroke="#5c5c00" stroke-width="2"/><line x1="1559.60" y1="0" x2="1559.60" y2="515.0" stroke="#5c5c00" stroke-width="2"/><line x1="1567.24" y1="0" x2="1567.24" y2="515.0" stroke="#5c5c00" stroke-width="2"/><line x1="1573.98" y1="0" x2="1573.98" y2="515.0" stroke="#5c5c00" stroke-width="2"/><line x1="0" y1="10.73" x2="1580.0" y2="10.73" stroke="#5c5c00" stroke-width="2"/><line x1="0" y1="21.46" x2="1580.0" y2="21.46" stroke="#5c5c00" stroke-width="2"/><line x1="0" y1="32.19" x2="1580.0" y2="32.19" stroke="#5c5c00" stroke-width="2"/><line x1="0" y1="53.65" x2="1580.0" y2="53.65" stroke="#5c5c00" stroke-width="2"/><line x1="0" y1="64.38" x2="1580.0" y2="64.38" stroke="#5c5c00" stroke-width="2"/><line x1="0" y1="75.10" x2="1580.0" y2="75.10" stroke="#5c5c00" stroke-width="2"/><line x1="0" y1="96.56" x2="1580.0" y2="96.56" stroke="#5c5c00" stroke-width="2"/><line x1="0" y1="107.29" x2="1580.0" y2="107.29" stroke="#5c5c00" stroke-width="2"/><line x1="0" y1="118.02" x2="1580.0" y2="118.02" stroke="#5c5c00" stroke-width="2"/><line x1="0" y1="139.48" x2="1580.0" y2="139.48" stroke="#5c5c00" stroke-width="2"/><line x1="0" y1="150.21" x2="1580.0" y2="150.21" stroke="#5c5c00" stroke-width="2"/><line x1="0" y1="160.94" x2="1580.0" y2="160.94" stroke="#5c5c00" stroke-width="2"/><line x1="0" y1="182.40" x2="1580.0" y2="182.40" stroke="#5c5c00" stroke-width="2"/><line x1="0" y1="193.12" x2="1580.0" y2="193.12" stroke="#5c5c00" stroke-width="2"/><line x1="0" y1="203.85" x2="1580.0" y2="203.85" stroke="#5c5c00" stroke-width="2"/><line x1="0" y1="225.31" x2="1580.0" y2="225.31" stroke="#5c5c00" stroke-width="2"/><line x1="0" y1="236.04" x2="1580.0" y2="236.04" stroke="#5c5c00" stroke-width="2"/><line x1="0" y1="246.77" x2="1580.0" y2="246.77" stroke="#5c5c00" stroke-width="2"/><line x1="0" y1="268.23" x2="1580.0" y2="268.23" stroke="#5c5c00" stroke-width="2"/><line x1="0" y1="278.96" x2="1580.0" y2="278.96" stroke="#5c5c00" stroke-width="2"/><line x1="0" y1="289.69" x2="1580.0" y2="289.69" stroke="#5c5c00" stroke-width="2"/><line x1="0" y1="311.15" x2="1580.0" y2="311.15" stroke="#5c5c00" stroke-width="2"/><line x1="0" y1="321.88" x2="1580.0" y2="321.88" stroke="#5c5c00" stroke-width="2"/><line x1="0" y1="332.60" x2="1580.0" y2="332.60" stroke="#5c5c00" stroke-width="2"/><line x1="0" y1="354.06" x2="1580.0" y2="354.06" stroke="#5c5c00" stroke-width="2"/><line x1="0" y1="364.79" x2="1580.0" y2="364.79" stroke="#5c5c00" stroke-width="2"/><line x1="0" y1="375.52" x2="1580.0" y2="375.52" stroke="#5c5c00" stroke-width="2"/><line x1="0" y1="396.98" x2="1580.0" y2="396.98" stroke="#5c5c00" stroke-width="2"/><line x1="0" y1="407.71" x2="1580.0" y2="407.71" stroke="#5c5c00" stroke-width="2"/><line x1="0" y1="418.44" x2="1580.0" y2="418.44" stroke="#5c5c00" stroke-width="2"/><line x1="0" y1="439.90" x2="1580.0" y2="439.90" stroke="#5c5c00" stroke-width="2"/><line x1="0" y1="450.62" x2="1580.0" y2="450.62" stroke="#5c5c00" stroke-width="2"/><line x1="0" y1="461.35" x2="1580.0" y2="461.35" stroke="#5c5c00" stroke-width="2"/><line x1="0" y1="482.81" x2="1580.0" y2="482.81" stroke="#5c5c00" stroke-width="2"/><line x1="0" y1="493.54" x2="1580.0" y2="493.54" stroke="#5c5c00" stroke-width="2"/><line x1="0" y1="504.27" x2="1580.0" y2="504.27" stroke="#5c5c00" stroke-width="2"/><line x1="131.67" y1="0" x2="131.67" y2="515.0" stroke="#9c9c00" stroke-width="2"/><line x1="263.33" y1="0" x2="263.33" y2="515.0" stroke="#9c9c00" stroke-width="2"/><line x1="395.00" y1="0" x2="395.00" y2="515.0" stroke="#9c9c00" stroke-width="2"/><line x1="526.67" y1="0" x2="526.67" y2="515.0" stroke="#9c9c00" stroke-width="2"/><line x1="658.33" y1="0" x2="658.33" y2="515.0" stroke="#9c9c00" stroke-width="2"/><line x1="790.00" y1="0" x2="790.00" y2="515.0" stroke="#9c9c00" stroke-width="2"/><line x1="921.67" y1="0" x2="921.67" y2="515.0" stroke="#9c9c00" stroke-width="2"/><line x1="1053.33" y1="0" x2="1053.33" y2="515.0" stroke="#9c9c00" stroke-width="2"/><line x1="1185.00" y1="0" x2="1185.00" y2="515.0" stroke="#9c9c00" stroke-width="2"/><line x1="1316.67" y1="0" x2="1316.67" y2="515.0" stroke="#9c9c00" stroke-width="2"/><line x1="1448.33" y1="0" x2="1448.33" y2="515.0" stroke="#9c9c00" stroke-width="2"/><line x1="0" y1="42.92" x2="1580.0" y2="42.92" stroke="#9c9c00" stroke-width="2"/><line x1="0" y1="85.83" x2="1580.0" y2="85.83" stroke="#9c9c00" stroke-width="2"/><line x1="0" y1="128.75" x2="1580.0" y2="128.75" stroke="#9c9c00" stroke-width="2"/><line x1="0" y1="171.67" x2="1580.0" y2="171.67" stroke="#9c9c00" stroke-width="2"/><line x1="0" y1="214.58" x2="1580.0" y2="214.58" stroke="#9c9c00" stroke-width="2"/><line x1="0" y1="257.50" x2="1580.0" y2="257.50" stroke="#9c9c00" stroke-width="2"/><line x1="0" y1="300.42" x2="1580.0" y2="300.42" stroke="#9c9c00" stroke-width="2"/><line x1="0" y1="343.33" x2="1580.0" y2="343.33" stroke="#9c9c00" stroke-width="2"/><line x1="0" y1="386.25" x2="1580.0" y2="386.25" stroke="#9c9c00" stroke-width="2"/><line x1="0" y1="429.17" x2="1580.0" y2="429.17" stroke="#9c9c00" stroke-width="2"/><line x1="0" y1="472.08" x2="1580.0" y2="472.08" stroke="#9c9c00" stroke-width="2"/><path d="M0.0 487.5 L358.7 487.5" fill="none" stroke="#00ff00" stroke-width="5.7" stroke-linejoin="miter"/><path d="M1352.7 487.5 L1580.0 487.5" fill="none" stroke="#00ff00" stroke-width="5.7" stroke-linejoin="miter"/><path d="M0.0 481.5 L2.6 478.1 L5.3 474.7 L7.9 471.2 L10.5 467.8 L13.2 464.4 L15.8 460.9 L18.4 457.5 L21.1 454.1 L23.7 450.6 L26.3 447.2 L29.0 443.8 L31.6 440.3 L34.2 436.9 L36.9 433.5 L39.5 430.0 L42.1 426.6 L44.8 423.2 L47.4 419.7 L50.0 416.3 L52.7 412.9 L55.3 409.4 L57.9 406.0 L60.6 402.6 L63.2 399.1 L65.8 395.7 L68.5 392.3 L71.1 388.9 L73.7 385.4 L76.4 382.0 L79.0 378.6 L81.6 375.1 L84.3 371.7 L86.9 368.3 L89.5 364.8 L92.2 361.4 L94.8 358.0 L97.4 354.6 L100.1 351.1 L102.7 347.7 L105.3 344.3 L108.0 340.9 L110.6 337.4 L113.2 334.0 L115.9 330.6 L118.5 327.2 L121.1 323.7 L123.8 320.3 L126.4 316.9 L129.0 313.5 L131.7 310.1 L134.3 306.7 L136.9 303.3 L139.6 299.9 L142.2 296.4 L144.8 293.0 L147.5 289.6 L150.1 286.3 L152.7 282.9 L155.4 279.5 L158.0 276.1 L160.6 272.7 L163.3 269.3 L165.9 266.0 L168.5 262.6 L171.2 259.2 L173.8 255.9 L176.4 252.5 L179.1 249.2 L181.7 245.9 L184.3 242.6 L187.0 239.3 L189.6 236.0 L192.2 232.7 L194.9 229.4 L197.5 226.2 L200.1 222.9 L202.8 219.7 L205.4 216.5 L208.0 213.3 L210.7 210.1 L213.3 207.0 L215.9 203.9 L218.6 200.8 L221.2 197.7 L223.8 194.7 L226.5 191.6 L229.1 188.6 L231.7 185.7 L234.4 182.8 L237.0 179.9 L239.6 177.0 L242.3 174.2 L244.9 171.4 L247.5 168.7 L250.2 166.0 L252.8 163.3 L255.4 160.7 L258.1 158.1 L260.7 155.5 L263.3 153.0 L266.0 150.6 L268.6 148.1 L271.2 145.7 L273.9 143.4 L276.5 141.1 L279.1 138.8 L281.8 136.5 L284.4 134.3 L287.0 132.2 L289.7 130.0 L292.3 127.9 L294.9 125.8 L297.6 123.7 L300.2 121.7 L302.8 119.7 L305.5 117.7 L308.1 115.8 L310.7 113.8 L313.4 111.9 L316.0 110.0 L318.6 108.1 L321.3 106.3 L323.9 104.4 L326.5 102.6 L329.2 100.8 L331.8 99.0 L334.4 97.2 L337.1 95.5 L339.7 93.7 L342.3 92.0 L345.0 90.2 L347.6 88.5 L350.2 86.8 L352.9 85.1 L355.5 83.5 L358.1 81.8 L358.7 487.5 L1352.7 487.5 L1353.5 44.3 L1356.2 45.2 L1358.8 46.1 L1361.4 47.1 L1364.1 48.1 L1366.7 49.2 L1369.3 50.2 L1372.0 51.4 L1374.6 52.5 L1377.2 53.7 L1379.9 54.9 L1382.5 56.2 L1385.1 57.4 L1387.8 58.8 L1390.4 60.1 L1393.0 61.5 L1395.7 62.9 L1398.3 64.3 L1400.9 65.7 L1403.6 67.2 L1406.2 68.6 L1408.8 70.1 L1411.5 71.6 L1414.1 73.2 L1416.7 74.7 L1419.4 76.3 L1422.0 77.8 L1424.6 79.4 L1427.3 81.0 L1429.9 82.6 L1432.5 84.2 L1435.2 85.9 L1437.8 87.5 L1440.4 89.1 L1443.1 90.8 L1445.7 92.4 L1448.3 94.1 L1451.0 95.7 L1453.6 97.4 L1456.2 99.1 L1458.9 100.7 L1461.5 102.4 L1464.1 104.1 L1466.8 105.8 L1469.4 107.5 L1472.0 109.2 L1474.7 110.8 L1477.3 112.5 L1479.9 114.2 L1482.6 115.9 L1485.2 117.6 L1487.8 119.3 L1490.5 121.0 L1493.1 122.7 L1495.7 124.4 L1498.4 126.1 L1501.0 127.9 L1503.6 129.6 L1506.3 131.3 L1508.9 133.0 L1511.5 134.7 L1514.2 136.4 L1516.8 138.1 L1519.4 139.8 L1522.1 141.5 L1524.7 143.2 L1527.3 145.0 L1530.0 146.7 L1532.6 148.4 L1535.2 150.1 L1537.9 151.8 L1540.5 153.5 L1543.1 155.2 L1545.8 157.0 L1548.4 158.7 L1551.0 160.4 L1553.7 162.1 L1556.3 163.8 L1558.9 165.5 L1561.6 167.2 L1564.2 169.0 L1566.8 170.7 L1569.5 172.4 L1572.1 174.1 L1574.7 175.8 L1577.4 177.5 L1580.0 179.3" fill="none" stroke="#ff4040" stroke-width="5.0" stroke-linejoin="miter"/><path d="M0.0 479.9 L2.6 476.5 L5.3 473.1 L7.9 469.6 L10.5 466.2 L13.2 462.8 L15.8 459.3 L18.4 455.9 L21.1 452.5 L23.7 449.0 L26.3 445.6 L29.0 442.2 L31.6 438.7 L34.2 435.3 L36.9 431.9 L39.5 428.4 L42.1 425.0 L44.8 421.6 L47.4 418.1 L50.0 414.7 L52.7 411.3 L55.3 407.8 L57.9 404.4 L60.6 401.0 L63.2 397.5 L65.8 394.1 L68.5 390.7 L71.1 387.3 L73.7 383.8 L76.4 380.4 L79.0 377.0 L81.6 373.5 L84.3 370.1 L86.9 366.7 L89.5 363.2 L92.2 359.8 L94.8 356.4 L97.4 353.0 L100.1 349.5 L102.7 346.1 L105.3 342.7 L108.0 339.3 L110.6 335.8 L113.2 332.4 L115.9 329.0 L118.5 325.6 L121.1 322.1 L123.8 318.7 L126.4 315.3 L129.0 311.9 L131.7 308.5 L134.3 305.1 L136.9 301.7 L139.6 298.3 L142.2 294.8 L144.8 291.4 L147.5 288.0 L150.1 284.7 L152.7 281.3 L155.4 277.9 L158.0 274.5 L160.6 271.1 L163.3 267.7 L165.9 264.4 L168.5 261.0 L171.2 257.6 L173.8 254.3 L176.4 250.9 L179.1 247.6 L181.7 244.3 L184.3 241.0 L187.0 237.7 L189.6 234.4 L192.2 231.1 L194.9 227.8 L197.5 224.6 L200.1 221.3 L202.8 218.1 L205.4 214.9 L208.0 211.7 L210.7 208.5 L213.3 205.4 L215.9 202.3 L218.6 199.2 L221.2 196.1 L223.8 193.1 L226.5 190.0 L229.1 187.0 L231.7 184.1 L234.4 181.2 L237.0 178.3 L239.6 175.4 L242.3 172.6 L244.9 169.8 L247.5 167.1 L250.2 164.4 L252.8 161.7 L255.4 159.1 L258.1 156.5 L260.7 153.9 L263.3 151.4 L266.0 149.0 L268.6 146.5 L271.2 144.1 L273.9 141.8 L276.5 139.5 L279.1 137.2 L281.8 134.9 L284.4 132.7 L287.0 130.6 L289.7 128.4 L292.3 126.3 L294.9 124.2 L297.6 122.1 L300.2 120.1 L302.8 118.1 L305.5 116.1 L308.1 114.2 L310.7 112.2 L313.4 110.3 L316.0 108.4 L318.6 106.5 L321.3 104.7 L323.9 102.8 L326.5 101.0 L329.2 99.2 L331.8 97.4 L334.4 95.6 L337.1 93.9 L339.7 92.1 L342.3 90.4 L345.0 88.6 L347.6 86.9 L350.2 85.2 L352.9 83.5 L355.5 81.9 L358.1 80.2 L360.8 78.6 L363.4 76.9 L366.0 75.3 L368.7 73.7 L371.3 72.2 L373.9 70.6 L376.6 69.1 L379.2 67.5 L381.8 66.0 L384.5 64.5 L387.1 63.1 L389.7 61.7 L392.4 60.2 L395.0 58.9 L397.6 57.5 L400.3 56.2 L402.9 54.9 L405.5 53.6 L408.2 52.4 L410.8 51.2 L413.4 50.0 L416.1 48.9 L418.7 47.8 L421.3 46.7 L424.0 45.7 L426.6 44.7 L429.2 43.8 L431.9 42.9 L434.5 42.1 L437.1 41.2 L439.8 40.5 L442.4 39.7 L445.0 39.0 L447.7 38.4 L450.3 37.7 L452.9 37.1 L455.6 36.6 L458.2 36.1 L460.8 35.6 L463.5 35.1 L466.1 34.7 L468.7 34.3 L471.4 33.9 L474.0 33.6 L476.6 33.3 L479.3 33.0 L481.9 32.7 L484.5 32.5 L487.2 32.2 L489.8 32.0 L492.4 31.8 L495.1 31.6 L497.7 31.5 L500.3 31.3 L503.0 31.2 L505.6 31.0 L508.2 30.9 L510.9 30.8 L513.5 30.7 L516.1 30.6 L518.8 30.5 L521.4 30.4 L524.0 30.4 L526.7 30.3 L529.3 30.2 L531.9 30.2 L534.6 30.1 L537.2 30.1 L539.8 30.1 L542.5 30.0 L545.1 30.0 L547.7 29.9 L550.4 29.9 L553.0 29.9 L555.6 29.9 L558.3 29.8 L560.9 29.8 L563.5 29.8 L566.2 29.8 L568.8 29.8 L571.4 29.8 L574.1 29.7 L576.7 29.7 L579.3 29.7 L582.0 29.7 L584.6 29.7 L587.2 29.7 L589.9 29.7 L592.5 29.7 L595.1 29.7 L597.8 29.7 L600.4 29.7 L603.0 29.7 L605.7 29.7 L608.3 29.7 L610.9 29.6 L613.6 29.6 L616.2 29.6 L618.8 29.6 L621.5 29.6 L624.1 29.6 L626.7 29.6 L629.4 29.6 L632.0 29.6 L634.6 29.6 L637.3 29.6 L639.9 29.6 L642.5 29.6 L645.2 29.6 L647.8 29.6 L650.4 29.6 L653.1 29.6 L655.7 29.6 L658.3 29.6 L661.0 29.6 L663.6 29.6 L666.2 29.6 L668.9 29.6 L671.5 29.6 L674.1 29.6 L676.8 29.6 L679.4 29.6 L682.0 29.6 L684.7 29.6 L687.3 29.6 L689.9 29.6 L692.6 29.6 L695.2 29.6 L697.8 29.6 L700.5 29.6 L703.1 29.6 L705.7 29.6 L708.4 29.6 L711.0 29.6 L713.6 29.6 L716.3 29.6 L718.9 29.6 L721.5 29.6 L724.2 29.6 L726.8 29.6 L729.4 29.6 L732.1 29.6 L734.7 29.6 L737.3 29.6 L740.0 29.6 L742.6 29.6 L745.2 29.6 L747.9 29.6 L750.5 29.6 L753.1 29.6 L755.8 29.6 L758.4 29.6 L761.0 29.6 L763.7 29.6 L766.3 29.6 L768.9 29.6 L771.6 29.6 L774.2 29.6 L776.8 29.6 L779.5 29.6 L782.1 29.6 L784.7 29.6 L787.4 29.6 L790.0 29.6 L792.6 29.6 L795.3 29.6 L797.9 29.6 L800.5 29.6 L803.2 29.6 L805.8 29.6 L808.4 29.6 L811.1 29.6 L813.7 29.6 L816.3 29.6 L819.0 29.6 L821.6 29.6 L824.2 29.6 L826.9 29.6 L829.5 29.6 L832.1 29.6 L834.8 29.6 L837.4 29.6 L840.0 29.6 L842.7 29.6 L845.3 29.6 L847.9 29.6 L850.6 29.6 L853.2 29.6 L855.8 29.6 L858.5 29.6 L861.1 29.6 L863.7 29.6 L866.4 29.6 L869.0 29.6 L871.6 29.6 L874.3 29.6 L876.9 29.6 L879.5 29.6 L882.2 29.6 L884.8 29.6 L887.4 29.6 L890.1 29.6 L892.7 29.6 L895.3 29.6 L898.0 29.6 L900.6 29.6 L903.2 29.6 L905.9 29.6 L908.5 29.6 L911.1 29.6 L913.8 29.6 L916.4 29.6 L919.0 29.6 L921.7 29.6 L924.3 29.6 L926.9 29.6 L929.6 29.6 L932.2 29.6 L934.8 29.6 L937.5 29.6 L940.1 29.6 L942.7 29.6 L945.4 29.6 L948.0 29.6 L950.6 29.6 L953.3 29.6 L955.9 29.6 L958.5 29.6 L961.2 29.6 L963.8 29.6 L966.4 29.6 L969.1 29.6 L971.7 29.6 L974.3 29.6 L977.0 29.6 L979.6 29.6 L982.2 29.6 L984.9 29.6 L987.5 29.6 L990.1 29.6 L992.8 29.6 L995.4 29.6 L998.0 29.6 L1000.7 29.6 L1003.3 29.6 L1005.9 29.6 L1008.6 29.6 L1011.2 29.6 L1013.8 29.6 L1016.5 29.6 L1019.1 29.6 L1021.7 29.6 L1024.4 29.6 L1027.0 29.6 L1029.6 29.6 L1032.3 29.6 L1034.9 29.6 L1037.5 29.6 L1040.2 29.6 L1042.8 29.6 L1045.4 29.6 L1048.1 29.6 L1050.7 29.6 L1053.3 29.6 L1056.0 29.6 L1058.6 29.6 L1061.2 29.6 L1063.9 29.6 L1066.5 29.6 L1069.1 29.6 L1071.8 29.6 L1074.4 29.6 L1077.0 29.6 L1079.7 29.6 L1082.3 29.6 L1084.9 29.6 L1087.6 29.6 L1090.2 29.6 L1092.8 29.6 L1095.5 29.6 L1098.1 29.6 L1100.7 29.6 L1103.4 29.6 L1106.0 29.6 L1108.6 29.6 L1111.3 29.6 L1113.9 29.6 L1116.5 29.6 L1119.2 29.6 L1121.8 29.6 L1124.4 29.6 L1127.1 29.6 L1129.7 29.6 L1132.3 29.6 L1135.0 29.6 L1137.6 29.6 L1140.2 29.6 L1142.9 29.6 L1145.5 29.6 L1148.1 29.6 L1150.8 29.6 L1153.4 29.6 L1156.0 29.6 L1158.7 29.6 L1161.3 29.6 L1163.9 29.6 L1166.6 29.6 L1169.2 29.6 L1171.8 29.6 L1174.5 29.6 L1177.1 29.7 L1179.7 29.7 L1182.4 29.7 L1185.0 29.7 L1187.6 29.7 L1190.3 29.7 L1192.9 29.7 L1195.5 29.7 L1198.2 29.7 L1200.8 29.7 L1203.4 29.7 L1206.1 29.7 L1208.7 29.7 L1211.3 29.7 L1214.0 29.8 L1216.6 29.8 L1219.2 29.8 L1221.9 29.8 L1224.5 29.8 L1227.1 29.8 L1229.8 29.9 L1232.4 29.9 L1235.0 29.9 L1237.7 29.9 L1240.3 30.0 L1242.9 30.0 L1245.6 30.0 L1248.2 30.1 L1250.8 30.1 L1253.5 30.2 L1256.1 30.2 L1258.7 30.3 L1261.4 30.4 L1264.0 30.4 L1266.6 30.5 L1269.3 30.6 L1271.9 30.7 L1274.5 30.8 L1277.2 30.9 L1279.8 31.0 L1282.4 31.1 L1285.1 31.3 L1287.7 31.4 L1290.3 31.6 L1293.0 31.8 L1295.6 32.0 L1298.2 32.2 L1300.9 32.4 L1303.5 32.7 L1306.1 32.9 L1308.8 33.2 L1311.4 33.5 L1314.0 33.9 L1316.7 34.2 L1319.3 34.6 L1321.9 35.0 L1324.6 35.5 L1327.2 36.0 L1329.8 36.5 L1332.5 37.0 L1335.1 37.6 L1337.7 38.2 L1340.4 38.9 L1343.0 39.6 L1345.6 40.3 L1348.3 41.1 L1350.9 41.9 L1353.5 42.7 L1356.2 43.6 L1358.8 44.5 L1361.4 45.5 L1364.1 46.5 L1366.7 47.6 L1369.3 48.6 L1372.0 49.8 L1374.6 50.9 L1377.2 52.1 L1379.9 53.3 L1382.5 54.6 L1385.1 55.8 L1387.8 57.2 L1390.4 58.5 L1393.0 59.9 L1395.7 61.3 L1398.3 62.7 L1400.9 64.1 L1403.6 65.6 L1406.2 67.0 L1408.8 68.5 L1411.5 70.0 L1414.1 71.6 L1416.7 73.1 L1419.4 74.7 L1422.0 76.2 L1424.6 77.8 L1427.3 79.4 L1429.9 81.0 L1432.5 82.6 L1435.2 84.3 L1437.8 85.9 L1440.4 87.5 L1443.1 89.2 L1445.7 90.8 L1448.3 92.5 L1451.0 94.1 L1453.6 95.8 L1456.2 97.5 L1458.9 99.1 L1461.5 100.8 L1464.1 102.5 L1466.8 104.2 L1469.4 105.9 L1472.0 107.6 L1474.7 109.2 L1477.3 110.9 L1479.9 112.6 L1482.6 114.3 L1485.2 116.0 L1487.8 117.7 L1490.5 119.4 L1493.1 121.1 L1495.7 122.8 L1498.4 124.5 L1501.0 126.3 L1503.6 128.0 L1506.3 129.7 L1508.9 131.4 L1511.5 133.1 L1514.2 134.8 L1516.8 136.5 L1519.4 138.2 L1522.1 139.9 L1524.7 141.6 L1527.3 143.4 L1530.0 145.1 L1532.6 146.8 L1535.2 148.5 L1537.9 150.2 L1540.5 151.9 L1543.1 153.6 L1545.8 155.4 L1548.4 157.1 L1551.0 158.8 L1553.7 160.5 L1556.3 162.2 L1558.9 163.9 L1561.6 165.6 L1564.2 167.4 L1566.8 169.1 L1569.5 170.8 L1572.1 172.5 L1574.7 174.2 L1577.4 175.9 L1580.0 177.7" fill="none" stroke="#ffffff" stroke-width="4.0" stroke-linejoin="miter"/><line x1="0.8" y1="0" x2="0.8" y2="515.0" stroke="#555" stroke-width="1.6"/><line x1="0" y1="0.8" x2="1580.0" y2="0.8" stroke="#555" stroke-width="1.6"/></svg>
<div style="position:absolute;left:1932.5px;top:856.0px;width:1580.0px;height:2.0px;background:#e8e8e8"></div>
<div style="position:absolute;left:0;top:0;width:3558.6px;height:1809px;overflow:hidden">
<div style="position:absolute;left:1919.5px;top:340.0px;width:10.0px;height:2.0px;background:#111"></div>
<div style="position:absolute;left:915.0px;top:331.8px;width:1000px;height:27.9px;line-height:27.9px;text-align:right;white-space:nowrap;font-family:'Liberation Mono', monospace;font-weight:normal;font-size:24.6px;color:#111;">10</div>
<div style="position:absolute;left:1919.5px;top:382.9px;width:10.0px;height:2.0px;background:#111"></div>
<div style="position:absolute;left:915.0px;top:374.7px;width:1000px;height:27.9px;line-height:27.9px;text-align:right;white-space:nowrap;font-family:'Liberation Mono', monospace;font-weight:normal;font-size:24.6px;color:#111;">0</div>
<div style="position:absolute;left:1919.5px;top:425.8px;width:10.0px;height:2.0px;background:#111"></div>
<div style="position:absolute;left:915.0px;top:417.7px;width:1000px;height:27.9px;line-height:27.9px;text-align:right;white-space:nowrap;font-family:'Liberation Mono', monospace;font-weight:normal;font-size:24.6px;color:#111;">&minus;10</div>
<div style="position:absolute;left:1919.5px;top:468.8px;width:10.0px;height:2.0px;background:#111"></div>
<div style="position:absolute;left:915.0px;top:460.6px;width:1000px;height:27.9px;line-height:27.9px;text-align:right;white-space:nowrap;font-family:'Liberation Mono', monospace;font-weight:normal;font-size:24.6px;color:#111;">&minus;20</div>
<div style="position:absolute;left:1919.5px;top:511.7px;width:10.0px;height:2.0px;background:#111"></div>
<div style="position:absolute;left:915.0px;top:503.5px;width:1000px;height:27.9px;line-height:27.9px;text-align:right;white-space:nowrap;font-family:'Liberation Mono', monospace;font-weight:normal;font-size:24.6px;color:#111;">&minus;30</div>
<div style="position:absolute;left:1919.5px;top:554.6px;width:10.0px;height:2.0px;background:#111"></div>
<div style="position:absolute;left:915.0px;top:546.4px;width:1000px;height:27.9px;line-height:27.9px;text-align:right;white-space:nowrap;font-family:'Liberation Mono', monospace;font-weight:normal;font-size:24.6px;color:#111;">&minus;40</div>
<div style="position:absolute;left:1919.5px;top:597.5px;width:10.0px;height:2.0px;background:#111"></div>
<div style="position:absolute;left:915.0px;top:589.3px;width:1000px;height:27.9px;line-height:27.9px;text-align:right;white-space:nowrap;font-family:'Liberation Mono', monospace;font-weight:normal;font-size:24.6px;color:#111;">&minus;50</div>
<div style="position:absolute;left:1919.5px;top:640.4px;width:10.0px;height:2.0px;background:#111"></div>
<div style="position:absolute;left:915.0px;top:632.2px;width:1000px;height:27.9px;line-height:27.9px;text-align:right;white-space:nowrap;font-family:'Liberation Mono', monospace;font-weight:normal;font-size:24.6px;color:#111;">&minus;60</div>
<div style="position:absolute;left:1919.5px;top:683.3px;width:10.0px;height:2.0px;background:#111"></div>
<div style="position:absolute;left:915.0px;top:675.2px;width:1000px;height:27.9px;line-height:27.9px;text-align:right;white-space:nowrap;font-family:'Liberation Mono', monospace;font-weight:normal;font-size:24.6px;color:#111;">&minus;70</div>
<div style="position:absolute;left:1919.5px;top:726.2px;width:10.0px;height:2.0px;background:#111"></div>
<div style="position:absolute;left:915.0px;top:718.1px;width:1000px;height:27.9px;line-height:27.9px;text-align:right;white-space:nowrap;font-family:'Liberation Mono', monospace;font-weight:normal;font-size:24.6px;color:#111;">&minus;80</div>
<div style="position:absolute;left:1919.5px;top:769.2px;width:10.0px;height:2.0px;background:#111"></div>
<div style="position:absolute;left:915.0px;top:761.0px;width:1000px;height:27.9px;line-height:27.9px;text-align:right;white-space:nowrap;font-family:'Liberation Mono', monospace;font-weight:normal;font-size:24.6px;color:#111;">&minus;90</div>
<div style="position:absolute;left:1919.5px;top:812.1px;width:10.0px;height:2.0px;background:#111"></div>
<div style="position:absolute;left:915.0px;top:803.9px;width:1000px;height:27.9px;line-height:27.9px;text-align:right;white-space:nowrap;font-family:'Liberation Mono', monospace;font-weight:normal;font-size:24.6px;color:#111;">&minus;100</div>
<div style="position:absolute;left:1919.5px;top:855.0px;width:10.0px;height:2.0px;background:#111"></div>
<div style="position:absolute;left:915.0px;top:846.8px;width:1000px;height:27.9px;line-height:27.9px;text-align:right;white-space:nowrap;font-family:'Liberation Mono', monospace;font-weight:normal;font-size:24.6px;color:#111;">&minus;110</div>
<div style="position:absolute;left:1931.5px;top:861.3px;width:2.0px;height:9.0px;background:#111"></div>
<div style="position:absolute;left:932.5px;top:875.2px;width:2000px;height:27.9px;line-height:27.9px;text-align:center;white-space:nowrap;font-family:'Liberation Mono', monospace;font-weight:normal;font-size:24.6px;color:#111;">0.0</div>
<div style="position:absolute;left:2063.2px;top:861.3px;width:2.0px;height:9.0px;background:#111"></div>
<div style="position:absolute;left:1064.2px;top:875.2px;width:2000px;height:27.9px;line-height:27.9px;text-align:center;white-space:nowrap;font-family:'Liberation Mono', monospace;font-weight:normal;font-size:24.6px;color:#111;">0.1</div>
<div style="position:absolute;left:2194.8px;top:861.3px;width:2.0px;height:9.0px;background:#111"></div>
<div style="position:absolute;left:1195.8px;top:875.2px;width:2000px;height:27.9px;line-height:27.9px;text-align:center;white-space:nowrap;font-family:'Liberation Mono', monospace;font-weight:normal;font-size:24.6px;color:#111;">1.0</div>
<div style="position:absolute;left:2326.5px;top:861.3px;width:2.0px;height:9.0px;background:#111"></div>
<div style="position:absolute;left:1327.5px;top:875.2px;width:2000px;height:27.9px;line-height:27.9px;text-align:center;white-space:nowrap;font-family:'Liberation Mono', monospace;font-weight:normal;font-size:24.6px;color:#111;">10.0</div>
<div style="position:absolute;left:2458.2px;top:861.3px;width:2.0px;height:9.0px;background:#111"></div>
<div style="position:absolute;left:1459.2px;top:875.2px;width:2000px;height:27.9px;line-height:27.9px;text-align:center;white-space:nowrap;font-family:'Liberation Mono', monospace;font-weight:normal;font-size:24.6px;color:#111;">1.0E+2</div>
<div style="position:absolute;left:2589.8px;top:861.3px;width:2.0px;height:9.0px;background:#111"></div>
<div style="position:absolute;left:1590.8px;top:875.2px;width:2000px;height:27.9px;line-height:27.9px;text-align:center;white-space:nowrap;font-family:'Liberation Mono', monospace;font-weight:normal;font-size:24.6px;color:#111;">1.0E+3</div>
<div style="position:absolute;left:2721.5px;top:861.3px;width:2.0px;height:9.0px;background:#111"></div>
<div style="position:absolute;left:1722.5px;top:875.2px;width:2000px;height:27.9px;line-height:27.9px;text-align:center;white-space:nowrap;font-family:'Liberation Mono', monospace;font-weight:normal;font-size:24.6px;color:#111;">1.0E+4</div>
<div style="position:absolute;left:2853.2px;top:861.3px;width:2.0px;height:9.0px;background:#111"></div>
<div style="position:absolute;left:1854.2px;top:875.2px;width:2000px;height:27.9px;line-height:27.9px;text-align:center;white-space:nowrap;font-family:'Liberation Mono', monospace;font-weight:normal;font-size:24.6px;color:#111;">1.0E+5</div>
<div style="position:absolute;left:2984.8px;top:861.3px;width:2.0px;height:9.0px;background:#111"></div>
<div style="position:absolute;left:1985.8px;top:875.2px;width:2000px;height:27.9px;line-height:27.9px;text-align:center;white-space:nowrap;font-family:'Liberation Mono', monospace;font-weight:normal;font-size:24.6px;color:#111;">1.0E+6</div>
<div style="position:absolute;left:3116.5px;top:861.3px;width:2.0px;height:9.0px;background:#111"></div>
<div style="position:absolute;left:2117.5px;top:875.2px;width:2000px;height:27.9px;line-height:27.9px;text-align:center;white-space:nowrap;font-family:'Liberation Mono', monospace;font-weight:normal;font-size:24.6px;color:#111;">1.0E+7</div>
<div style="position:absolute;left:3248.2px;top:861.3px;width:2.0px;height:9.0px;background:#111"></div>
<div style="position:absolute;left:2249.2px;top:875.2px;width:2000px;height:27.9px;line-height:27.9px;text-align:center;white-space:nowrap;font-family:'Liberation Mono', monospace;font-weight:normal;font-size:24.6px;color:#111;">1.0E+8</div>
<div style="position:absolute;left:3379.8px;top:861.3px;width:2.0px;height:9.0px;background:#111"></div>
<div style="position:absolute;left:2380.8px;top:875.2px;width:2000px;height:27.9px;line-height:27.9px;text-align:center;white-space:nowrap;font-family:'Liberation Mono', monospace;font-weight:normal;font-size:24.6px;color:#111;">1.0E+9</div>
<div style="position:absolute;left:3511.5px;top:861.3px;width:2.0px;height:9.0px;background:#111"></div>
<div style="position:absolute;left:2512.5px;top:875.2px;width:2000px;height:27.9px;line-height:27.9px;text-align:center;white-space:nowrap;font-family:'Liberation Mono', monospace;font-weight:normal;font-size:24.6px;color:#111;">1.0E+10</div>
</div>
<div style="position:absolute;left:1718.8px;top:910.3px;width:2000px;height:38.5px;line-height:38.5px;text-align:center;white-space:nowrap;font-family:'Liberation Mono', monospace;font-weight:bold;font-size:34.0px;color:#ff0a10;letter-spacing:4.90px;padding-left:4.90px;box-sizing:border-box">Frequency [Hz]</div>
<div style="position:absolute;left:1529.2px;top:576.9px;width:600px;height:50px;line-height:50px;text-align:center;font-family:'Liberation Mono',monospace;font-weight:bold;font-size:34px;color:#ff0a10;white-space:nowrap;letter-spacing:4.90px;padding-left:4.90px;box-sizing:border-box;transform:rotate(-90deg);transform-origin:300px 25px">Gain [db]</div>
<div style="position:absolute;left:3159.0px;top:281.4px;width:400px;height:134px;background:#c0c0c0;border-top:2px solid #d2d2d2"><div style="position:absolute;left:0;top:0;bottom:0;width:24px;background:linear-gradient(to right,#c8c8c8,#d6d6d6 50%,#c4c4c4)"></div><div style="position:absolute;right:0;top:0;bottom:0;width:22px;background:linear-gradient(to right,#c0c0c0,#8a8a8a 85%,#606060)"></div></div>
<div style="position:absolute;left:3190.8px;top:288.6px;height:26.4px;line-height:26.4px;white-space:nowrap;font-family:'Liberation Sans', sans-serif;font-weight:normal;font-size:23.6px;color:#111;">Gain</div>
<svg style="position:absolute;left:3476.0px;top:285.4px" width="55" height="35" viewBox="0 0 55 35"><rect x="0" y="0" width="55" height="35" fill="#000"/><path d="M8 30 L8 6 L30 6 L30 26 L47 26 L47 6" fill="none" stroke="#ffffff" stroke-width="3.5"/></svg>
<div style="position:absolute;left:3190.8px;top:333.4px;height:26.4px;line-height:26.4px;white-space:nowrap;font-family:'Liberation Sans', sans-serif;font-weight:normal;font-size:23.6px;color:#111;">Stability domain</div>
<svg style="position:absolute;left:3476.0px;top:330.7px" width="55" height="35" viewBox="0 0 55 35"><rect x="0" y="0" width="55" height="35" fill="#000"/><path d="M8 31 L8 9 L32 9 L32 28 L48 28" fill="none" stroke="#ff4040" stroke-width="3.5"/></svg>
<div style="position:absolute;left:3190.8px;top:378.2px;height:26.4px;line-height:26.4px;white-space:nowrap;font-family:'Liberation Sans', sans-serif;font-weight:normal;font-size:23.6px;color:#111;">Pozition</div>
<svg style="position:absolute;left:3476.0px;top:376.0px" width="55" height="35" viewBox="0 0 55 35"><rect x="0" y="0" width="55" height="35" fill="#000"/><path d="M8 31 L8 9 L32 9 L32 28 L48 28" fill="none" stroke="#00ff00" stroke-width="3.5"/></svg>
<div style="position:absolute;left:1761.0px;top:1017.0px;width:1798.6px;height:654.0px;background:#c1c1c1"><div style="position:absolute;left:0;top:0;right:0;height:4px;background:#d4d4d4"></div><div style="position:absolute;left:0;top:0;bottom:0;width:24px;background:linear-gradient(to right,#c8c8c8,#d6d6d6 45%,#c4c4c4)"></div><div style="position:absolute;right:0;top:0;bottom:0;width:28px;background:linear-gradient(to right,#c1c1c1,#8a8a8a 85%,#5a5a5a)"></div><div style="position:absolute;left:0;right:0;bottom:0;height:3px;background:#8a8a8a"></div></div>
<svg style="position:absolute;left:1932.5px;top:1035.0px" width="1567.1" height="539.0" viewBox="0 0 1567.1 539.0"><rect x="0" y="0" width="1567.1" height="539.0" fill="#000"/><line x1="39.31" y1="0" x2="39.31" y2="539.0" stroke="#5c5c00" stroke-width="2"/><line x1="62.31" y1="0" x2="62.31" y2="539.0" stroke="#5c5c00" stroke-width="2"/><line x1="78.62" y1="0" x2="78.62" y2="539.0" stroke="#5c5c00" stroke-width="2"/><line x1="91.28" y1="0" x2="91.28" y2="539.0" stroke="#5c5c00" stroke-width="2"/><line x1="101.62" y1="0" x2="101.62" y2="539.0" stroke="#5c5c00" stroke-width="2"/><line x1="110.36" y1="0" x2="110.36" y2="539.0" stroke="#5c5c00" stroke-width="2"/><line x1="117.94" y1="0" x2="117.94" y2="539.0" stroke="#5c5c00" stroke-width="2"/><line x1="124.62" y1="0" x2="124.62" y2="539.0" stroke="#5c5c00" stroke-width="2"/><line x1="169.90" y1="0" x2="169.90" y2="539.0" stroke="#5c5c00" stroke-width="2"/><line x1="192.90" y1="0" x2="192.90" y2="539.0" stroke="#5c5c00" stroke-width="2"/><line x1="209.22" y1="0" x2="209.22" y2="539.0" stroke="#5c5c00" stroke-width="2"/><line x1="221.87" y1="0" x2="221.87" y2="539.0" stroke="#5c5c00" stroke-width="2"/><line x1="232.21" y1="0" x2="232.21" y2="539.0" stroke="#5c5c00" stroke-width="2"/><line x1="240.95" y1="0" x2="240.95" y2="539.0" stroke="#5c5c00" stroke-width="2"/><line x1="248.53" y1="0" x2="248.53" y2="539.0" stroke="#5c5c00" stroke-width="2"/><line x1="255.21" y1="0" x2="255.21" y2="539.0" stroke="#5c5c00" stroke-width="2"/><line x1="300.50" y1="0" x2="300.50" y2="539.0" stroke="#5c5c00" stroke-width="2"/><line x1="323.49" y1="0" x2="323.49" y2="539.0" stroke="#5c5c00" stroke-width="2"/><line x1="339.81" y1="0" x2="339.81" y2="539.0" stroke="#5c5c00" stroke-width="2"/><line x1="352.46" y1="0" x2="352.46" y2="539.0" stroke="#5c5c00" stroke-width="2"/><line x1="362.80" y1="0" x2="362.80" y2="539.0" stroke="#5c5c00" stroke-width="2"/><line x1="371.55" y1="0" x2="371.55" y2="539.0" stroke="#5c5c00" stroke-width="2"/><line x1="379.12" y1="0" x2="379.12" y2="539.0" stroke="#5c5c00" stroke-width="2"/><line x1="385.80" y1="0" x2="385.80" y2="539.0" stroke="#5c5c00" stroke-width="2"/><line x1="431.09" y1="0" x2="431.09" y2="539.0" stroke="#5c5c00" stroke-width="2"/><line x1="454.08" y1="0" x2="454.08" y2="539.0" stroke="#5c5c00" stroke-width="2"/><line x1="470.40" y1="0" x2="470.40" y2="539.0" stroke="#5c5c00" stroke-width="2"/><line x1="483.05" y1="0" x2="483.05" y2="539.0" stroke="#5c5c00" stroke-width="2"/><line x1="493.40" y1="0" x2="493.40" y2="539.0" stroke="#5c5c00" stroke-width="2"/><line x1="502.14" y1="0" x2="502.14" y2="539.0" stroke="#5c5c00" stroke-width="2"/><line x1="509.71" y1="0" x2="509.71" y2="539.0" stroke="#5c5c00" stroke-width="2"/><line x1="516.39" y1="0" x2="516.39" y2="539.0" stroke="#5c5c00" stroke-width="2"/><line x1="561.68" y1="0" x2="561.68" y2="539.0" stroke="#5c5c00" stroke-width="2"/><line x1="584.67" y1="0" x2="584.67" y2="539.0" stroke="#5c5c00" stroke-width="2"/><line x1="600.99" y1="0" x2="600.99" y2="539.0" stroke="#5c5c00" stroke-width="2"/><line x1="613.65" y1="0" x2="613.65" y2="539.0" stroke="#5c5c00" stroke-width="2"/><line x1="623.99" y1="0" x2="623.99" y2="539.0" stroke="#5c5c00" stroke-width="2"/><line x1="632.73" y1="0" x2="632.73" y2="539.0" stroke="#5c5c00" stroke-width="2"/><line x1="640.30" y1="0" x2="640.30" y2="539.0" stroke="#5c5c00" stroke-width="2"/><line x1="646.98" y1="0" x2="646.98" y2="539.0" stroke="#5c5c00" stroke-width="2"/><line x1="692.27" y1="0" x2="692.27" y2="539.0" stroke="#5c5c00" stroke-width="2"/><line x1="715.27" y1="0" x2="715.27" y2="539.0" stroke="#5c5c00" stroke-width="2"/><line x1="731.58" y1="0" x2="731.58" y2="539.0" stroke="#5c5c00" stroke-width="2"/><line x1="744.24" y1="0" x2="744.24" y2="539.0" stroke="#5c5c00" stroke-width="2"/><line x1="754.58" y1="0" x2="754.58" y2="539.0" stroke="#5c5c00" stroke-width="2"/><line x1="763.32" y1="0" x2="763.32" y2="539.0" stroke="#5c5c00" stroke-width="2"/><line x1="770.89" y1="0" x2="770.89" y2="539.0" stroke="#5c5c00" stroke-width="2"/><line x1="777.57" y1="0" x2="777.57" y2="539.0" stroke="#5c5c00" stroke-width="2"/><line x1="822.86" y1="0" x2="822.86" y2="539.0" stroke="#5c5c00" stroke-width="2"/><line x1="845.86" y1="0" x2="845.86" y2="539.0" stroke="#5c5c00" stroke-width="2"/><line x1="862.17" y1="0" x2="862.17" y2="539.0" stroke="#5c5c00" stroke-width="2"/><line x1="874.83" y1="0" x2="874.83" y2="539.0" stroke="#5c5c00" stroke-width="2"/><line x1="885.17" y1="0" x2="885.17" y2="539.0" stroke="#5c5c00" stroke-width="2"/><line x1="893.91" y1="0" x2="893.91" y2="539.0" stroke="#5c5c00" stroke-width="2"/><line x1="901.49" y1="0" x2="901.49" y2="539.0" stroke="#5c5c00" stroke-width="2"/><line x1="908.17" y1="0" x2="908.17" y2="539.0" stroke="#5c5c00" stroke-width="2"/><line x1="953.45" y1="0" x2="953.45" y2="539.0" stroke="#5c5c00" stroke-width="2"/><line x1="976.45" y1="0" x2="976.45" y2="539.0" stroke="#5c5c00" stroke-width="2"/><line x1="992.77" y1="0" x2="992.77" y2="539.0" stroke="#5c5c00" stroke-width="2"/><line x1="1005.42" y1="0" x2="1005.42" y2="539.0" stroke="#5c5c00" stroke-width="2"/><line x1="1015.76" y1="0" x2="1015.76" y2="539.0" stroke="#5c5c00" stroke-width="2"/><line x1="1024.50" y1="0" x2="1024.50" y2="539.0" stroke="#5c5c00" stroke-width="2"/><line x1="1032.08" y1="0" x2="1032.08" y2="539.0" stroke="#5c5c00" stroke-width="2"/><line x1="1038.76" y1="0" x2="1038.76" y2="539.0" stroke="#5c5c00" stroke-width="2"/><line x1="1084.05" y1="0" x2="1084.05" y2="539.0" stroke="#5c5c00" stroke-width="2"/><line x1="1107.04" y1="0" x2="1107.04" y2="539.0" stroke="#5c5c00" stroke-width="2"/><line x1="1123.36" y1="0" x2="1123.36" y2="539.0" stroke="#5c5c00" stroke-width="2"/><line x1="1136.01" y1="0" x2="1136.01" y2="539.0" stroke="#5c5c00" stroke-width="2"/><line x1="1146.35" y1="0" x2="1146.35" y2="539.0" stroke="#5c5c00" stroke-width="2"/><line x1="1155.10" y1="0" x2="1155.10" y2="539.0" stroke="#5c5c00" stroke-width="2"/><line x1="1162.67" y1="0" x2="1162.67" y2="539.0" stroke="#5c5c00" stroke-width="2"/><line x1="1169.35" y1="0" x2="1169.35" y2="539.0" stroke="#5c5c00" stroke-width="2"/><line x1="1214.64" y1="0" x2="1214.64" y2="539.0" stroke="#5c5c00" stroke-width="2"/><line x1="1237.63" y1="0" x2="1237.63" y2="539.0" stroke="#5c5c00" stroke-width="2"/><line x1="1253.95" y1="0" x2="1253.95" y2="539.0" stroke="#5c5c00" stroke-width="2"/><line x1="1266.60" y1="0" x2="1266.60" y2="539.0" stroke="#5c5c00" stroke-width="2"/><line x1="1276.95" y1="0" x2="1276.95" y2="539.0" stroke="#5c5c00" stroke-width="2"/><line x1="1285.69" y1="0" x2="1285.69" y2="539.0" stroke="#5c5c00" stroke-width="2"/><line x1="1293.26" y1="0" x2="1293.26" y2="539.0" stroke="#5c5c00" stroke-width="2"/><line x1="1299.94" y1="0" x2="1299.94" y2="539.0" stroke="#5c5c00" stroke-width="2"/><line x1="1345.23" y1="0" x2="1345.23" y2="539.0" stroke="#5c5c00" stroke-width="2"/><line x1="1368.22" y1="0" x2="1368.22" y2="539.0" stroke="#5c5c00" stroke-width="2"/><line x1="1384.54" y1="0" x2="1384.54" y2="539.0" stroke="#5c5c00" stroke-width="2"/><line x1="1397.20" y1="0" x2="1397.20" y2="539.0" stroke="#5c5c00" stroke-width="2"/><line x1="1407.54" y1="0" x2="1407.54" y2="539.0" stroke="#5c5c00" stroke-width="2"/><line x1="1416.28" y1="0" x2="1416.28" y2="539.0" stroke="#5c5c00" stroke-width="2"/><line x1="1423.85" y1="0" x2="1423.85" y2="539.0" stroke="#5c5c00" stroke-width="2"/><line x1="1430.53" y1="0" x2="1430.53" y2="539.0" stroke="#5c5c00" stroke-width="2"/><line x1="1475.82" y1="0" x2="1475.82" y2="539.0" stroke="#5c5c00" stroke-width="2"/><line x1="1498.82" y1="0" x2="1498.82" y2="539.0" stroke="#5c5c00" stroke-width="2"/><line x1="1515.13" y1="0" x2="1515.13" y2="539.0" stroke="#5c5c00" stroke-width="2"/><line x1="1527.79" y1="0" x2="1527.79" y2="539.0" stroke="#5c5c00" stroke-width="2"/><line x1="1538.13" y1="0" x2="1538.13" y2="539.0" stroke="#5c5c00" stroke-width="2"/><line x1="1546.87" y1="0" x2="1546.87" y2="539.0" stroke="#5c5c00" stroke-width="2"/><line x1="1554.44" y1="0" x2="1554.44" y2="539.0" stroke="#5c5c00" stroke-width="2"/><line x1="1561.12" y1="0" x2="1561.12" y2="539.0" stroke="#5c5c00" stroke-width="2"/><line x1="0" y1="13.48" x2="1567.1" y2="13.48" stroke="#5c5c00" stroke-width="2"/><line x1="0" y1="26.95" x2="1567.1" y2="26.95" stroke="#5c5c00" stroke-width="2"/><line x1="0" y1="40.42" x2="1567.1" y2="40.42" stroke="#5c5c00" stroke-width="2"/><line x1="0" y1="53.90" x2="1567.1" y2="53.90" stroke="#5c5c00" stroke-width="2"/><line x1="0" y1="80.85" x2="1567.1" y2="80.85" stroke="#5c5c00" stroke-width="2"/><line x1="0" y1="94.32" x2="1567.1" y2="94.32" stroke="#5c5c00" stroke-width="2"/><line x1="0" y1="107.80" x2="1567.1" y2="107.80" stroke="#5c5c00" stroke-width="2"/><line x1="0" y1="121.28" x2="1567.1" y2="121.28" stroke="#5c5c00" stroke-width="2"/><line x1="0" y1="148.23" x2="1567.1" y2="148.23" stroke="#5c5c00" stroke-width="2"/><line x1="0" y1="161.70" x2="1567.1" y2="161.70" stroke="#5c5c00" stroke-width="2"/><line x1="0" y1="175.18" x2="1567.1" y2="175.18" stroke="#5c5c00" stroke-width="2"/><line x1="0" y1="188.65" x2="1567.1" y2="188.65" stroke="#5c5c00" stroke-width="2"/><line x1="0" y1="215.60" x2="1567.1" y2="215.60" stroke="#5c5c00" stroke-width="2"/><line x1="0" y1="229.07" x2="1567.1" y2="229.07" stroke="#5c5c00" stroke-width="2"/><line x1="0" y1="242.55" x2="1567.1" y2="242.55" stroke="#5c5c00" stroke-width="2"/><line x1="0" y1="256.02" x2="1567.1" y2="256.02" stroke="#5c5c00" stroke-width="2"/><line x1="0" y1="282.98" x2="1567.1" y2="282.98" stroke="#5c5c00" stroke-width="2"/><line x1="0" y1="296.45" x2="1567.1" y2="296.45" stroke="#5c5c00" stroke-width="2"/><line x1="0" y1="309.92" x2="1567.1" y2="309.92" stroke="#5c5c00" stroke-width="2"/><line x1="0" y1="323.40" x2="1567.1" y2="323.40" stroke="#5c5c00" stroke-width="2"/><line x1="0" y1="350.35" x2="1567.1" y2="350.35" stroke="#5c5c00" stroke-width="2"/><line x1="0" y1="363.83" x2="1567.1" y2="363.83" stroke="#5c5c00" stroke-width="2"/><line x1="0" y1="377.30" x2="1567.1" y2="377.30" stroke="#5c5c00" stroke-width="2"/><line x1="0" y1="390.77" x2="1567.1" y2="390.77" stroke="#5c5c00" stroke-width="2"/><line x1="0" y1="417.73" x2="1567.1" y2="417.73" stroke="#5c5c00" stroke-width="2"/><line x1="0" y1="431.20" x2="1567.1" y2="431.20" stroke="#5c5c00" stroke-width="2"/><line x1="0" y1="444.67" x2="1567.1" y2="444.67" stroke="#5c5c00" stroke-width="2"/><line x1="0" y1="458.15" x2="1567.1" y2="458.15" stroke="#5c5c00" stroke-width="2"/><line x1="0" y1="485.10" x2="1567.1" y2="485.10" stroke="#5c5c00" stroke-width="2"/><line x1="0" y1="498.58" x2="1567.1" y2="498.58" stroke="#5c5c00" stroke-width="2"/><line x1="0" y1="512.05" x2="1567.1" y2="512.05" stroke="#5c5c00" stroke-width="2"/><line x1="0" y1="525.52" x2="1567.1" y2="525.52" stroke="#5c5c00" stroke-width="2"/><line x1="130.59" y1="0" x2="130.59" y2="539.0" stroke="#9c9c00" stroke-width="2"/><line x1="261.18" y1="0" x2="261.18" y2="539.0" stroke="#9c9c00" stroke-width="2"/><line x1="391.77" y1="0" x2="391.77" y2="539.0" stroke="#9c9c00" stroke-width="2"/><line x1="522.37" y1="0" x2="522.37" y2="539.0" stroke="#9c9c00" stroke-width="2"/><line x1="652.96" y1="0" x2="652.96" y2="539.0" stroke="#9c9c00" stroke-width="2"/><line x1="783.55" y1="0" x2="783.55" y2="539.0" stroke="#9c9c00" stroke-width="2"/><line x1="914.14" y1="0" x2="914.14" y2="539.0" stroke="#9c9c00" stroke-width="2"/><line x1="1044.73" y1="0" x2="1044.73" y2="539.0" stroke="#9c9c00" stroke-width="2"/><line x1="1175.33" y1="0" x2="1175.33" y2="539.0" stroke="#9c9c00" stroke-width="2"/><line x1="1305.92" y1="0" x2="1305.92" y2="539.0" stroke="#9c9c00" stroke-width="2"/><line x1="1436.51" y1="0" x2="1436.51" y2="539.0" stroke="#9c9c00" stroke-width="2"/><line x1="0" y1="67.38" x2="1567.1" y2="67.38" stroke="#9c9c00" stroke-width="2"/><line x1="0" y1="134.75" x2="1567.1" y2="134.75" stroke="#9c9c00" stroke-width="2"/><line x1="0" y1="202.12" x2="1567.1" y2="202.12" stroke="#9c9c00" stroke-width="2"/><line x1="0" y1="269.50" x2="1567.1" y2="269.50" stroke="#9c9c00" stroke-width="2"/><line x1="0" y1="336.88" x2="1567.1" y2="336.88" stroke="#9c9c00" stroke-width="2"/><line x1="0" y1="404.25" x2="1567.1" y2="404.25" stroke="#9c9c00" stroke-width="2"/><line x1="0" y1="471.62" x2="1567.1" y2="471.62" stroke="#9c9c00" stroke-width="2"/><path d="M0.0 513.0 L1567.1 513.0" fill="none" stroke="#00ff00" stroke-width="6.0" stroke-linejoin="miter"/><path d="M0.0 271.7 L2.6 271.7 L5.2 271.7 L7.8 271.8 L10.4 271.8 L13.1 271.8 L15.7 271.9 L18.3 271.9 L20.9 272.0 L23.5 272.0 L26.1 272.0 L28.7 272.1 L31.3 272.1 L34.0 272.2 L36.6 272.2 L39.2 272.3 L41.8 272.3 L44.4 272.4 L47.0 272.5 L49.6 272.5 L52.2 272.6 L54.8 272.7 L57.5 272.7 L60.1 272.8 L62.7 272.9 L65.3 273.0 L67.9 273.1 L70.5 273.1 L73.1 273.2 L75.7 273.3 L78.4 273.4 L81.0 273.6 L83.6 273.7 L86.2 273.8 L88.8 273.9 L91.4 274.1 L94.0 274.2 L96.6 274.3 L99.2 274.5 L101.9 274.7 L104.5 274.8 L107.1 275.0 L109.7 275.2 L112.3 275.4 L114.9 275.6 L117.5 275.8 L120.1 276.0 L122.8 276.2 L125.4 276.5 L128.0 276.7 L130.6 277.0 L133.2 277.3 L135.8 277.6 L138.4 277.9 L141.0 278.2 L143.7 278.5 L146.3 278.9 L148.9 279.2 L151.5 279.6 L154.1 280.0 L156.7 280.4 L159.3 280.9 L161.9 281.3 L164.5 281.8 L167.2 282.3 L169.8 282.8 L172.4 283.3 L175.0 283.9 L177.6 284.5 L180.2 285.1 L182.8 285.8 L185.4 286.5 L188.1 287.2 L190.7 287.9 L193.3 288.7 L195.9 289.5 L198.5 290.3 L201.1 291.2 L203.7 292.1 L206.3 293.0 L208.9 294.0 L211.6 295.1 L214.2 296.1 L216.8 297.2 L219.4 298.4 L222.0 299.6 L224.6 300.8 L227.2 302.1 L229.8 303.4 L232.5 304.8 L235.1 306.2 L237.7 307.7 L240.3 309.2 L242.9 310.8 L245.5 312.4 L248.1 314.0 L250.7 315.7 L253.3 317.4 L256.0 319.2 L258.6 321.0 L261.2 322.8 L263.8 324.7 L266.4 326.6 L269.0 328.6 L271.6 330.5 L274.2 332.5 L276.9 334.5 L279.5 336.5 L282.1 338.5 L284.7 340.6 L287.3 342.6 L289.9 344.7 L292.5 346.7 L295.1 348.8 L297.7 350.8 L300.4 352.8 L303.0 354.8 L305.6 356.8 L308.2 358.8 L310.8 360.8 L313.4 362.8 L316.0 364.7 L318.6 366.6 L321.3 368.5 L323.9 370.4 L326.5 372.3 L329.1 374.2 L331.7 376.0 L334.3 377.8 L336.9 379.6 L339.5 381.4 L342.2 383.2 L344.8 385.0 L347.4 386.8 L350.0 388.5 L352.6 390.3 L355.2 392.1 L355.8 512.0 L1341.6 512.0 L1342.5 150.7 L1345.1 154.2 L1347.7 157.8 L1350.3 161.3 L1352.9 164.8 L1355.5 168.3 L1358.2 171.7 L1360.8 175.1 L1363.4 178.4 L1366.0 181.7 L1368.6 184.9 L1371.2 188.1 L1373.8 191.2 L1376.4 194.2 L1379.0 197.2 L1381.7 200.0 L1384.3 202.8 L1386.9 205.5 L1389.5 208.2 L1392.1 210.7 L1394.7 213.2 L1397.3 215.6 L1399.9 217.9 L1402.6 220.1 L1405.2 222.2 L1407.8 224.3 L1410.4 226.3 L1413.0 228.2 L1415.6 230.0 L1418.2 231.8 L1420.8 233.5 L1423.4 235.1 L1426.1 236.7 L1428.7 238.2 L1431.3 239.6 L1433.9 241.0 L1436.5 242.3 L1439.1 243.6 L1441.7 244.8 L1444.3 246.0 L1447.0 247.1 L1449.6 248.2 L1452.2 249.2 L1454.8 250.1 L1457.4 251.1 L1460.0 252.0 L1462.6 252.8 L1465.2 253.6 L1467.9 254.4 L1470.5 255.2 L1473.1 255.9 L1475.7 256.6 L1478.3 257.2 L1480.9 257.8 L1483.5 258.4 L1486.1 259.0 L1488.7 259.5 L1491.4 260.1 L1494.0 260.5 L1496.6 261.0 L1499.2 261.5 L1501.8 261.9 L1504.4 262.3 L1507.0 262.7 L1509.6 263.1 L1512.3 263.5 L1514.9 263.8 L1517.5 264.1 L1520.1 264.4 L1522.7 264.7 L1525.3 265.0 L1527.9 265.3 L1530.5 265.6 L1533.1 265.8 L1535.8 266.0 L1538.4 266.3 L1541.0 266.5 L1543.6 266.7 L1546.2 266.9 L1548.8 267.1 L1551.4 267.3 L1554.0 267.4 L1556.7 267.6 L1559.3 267.8 L1561.9 267.9 L1564.5 268.1 L1567.1 268.2" fill="none" stroke="#ff4040" stroke-width="5.0" stroke-linejoin="miter"/><path d="M0.0 270.1 L2.6 270.1 L5.2 270.1 L7.8 270.2 L10.4 270.2 L13.1 270.2 L15.7 270.3 L18.3 270.3 L20.9 270.4 L23.5 270.4 L26.1 270.4 L28.7 270.5 L31.3 270.5 L34.0 270.6 L36.6 270.6 L39.2 270.7 L41.8 270.7 L44.4 270.8 L47.0 270.9 L49.6 270.9 L52.2 271.0 L54.8 271.1 L57.5 271.1 L60.1 271.2 L62.7 271.3 L65.3 271.4 L67.9 271.5 L70.5 271.5 L73.1 271.6 L75.7 271.7 L78.4 271.8 L81.0 272.0 L83.6 272.1 L86.2 272.2 L88.8 272.3 L91.4 272.5 L94.0 272.6 L96.6 272.7 L99.2 272.9 L101.9 273.1 L104.5 273.2 L107.1 273.4 L109.7 273.6 L112.3 273.8 L114.9 274.0 L117.5 274.2 L120.1 274.4 L122.8 274.6 L125.4 274.9 L128.0 275.1 L130.6 275.4 L133.2 275.7 L135.8 276.0 L138.4 276.3 L141.0 276.6 L143.7 276.9 L146.3 277.3 L148.9 277.6 L151.5 278.0 L154.1 278.4 L156.7 278.8 L159.3 279.3 L161.9 279.7 L164.5 280.2 L167.2 280.7 L169.8 281.2 L172.4 281.7 L175.0 282.3 L177.6 282.9 L180.2 283.5 L182.8 284.2 L185.4 284.9 L188.1 285.6 L190.7 286.3 L193.3 287.1 L195.9 287.9 L198.5 288.7 L201.1 289.6 L203.7 290.5 L206.3 291.4 L208.9 292.4 L211.6 293.5 L214.2 294.5 L216.8 295.6 L219.4 296.8 L222.0 298.0 L224.6 299.2 L227.2 300.5 L229.8 301.8 L232.5 303.2 L235.1 304.6 L237.7 306.1 L240.3 307.6 L242.9 309.2 L245.5 310.8 L248.1 312.4 L250.7 314.1 L253.3 315.8 L256.0 317.6 L258.6 319.4 L261.2 321.2 L263.8 323.1 L266.4 325.0 L269.0 327.0 L271.6 328.9 L274.2 330.9 L276.9 332.9 L279.5 334.9 L282.1 336.9 L284.7 339.0 L287.3 341.0 L289.9 343.1 L292.5 345.1 L295.1 347.2 L297.7 349.2 L300.4 351.2 L303.0 353.2 L305.6 355.2 L308.2 357.2 L310.8 359.2 L313.4 361.2 L316.0 363.1 L318.6 365.0 L321.3 366.9 L323.9 368.8 L326.5 370.7 L329.1 372.6 L331.7 374.4 L334.3 376.2 L336.9 378.0 L339.5 379.8 L342.2 381.6 L344.8 383.4 L347.4 385.2 L350.0 386.9 L352.6 388.7 L355.2 390.5 L357.8 392.2 L360.4 394.0 L363.0 395.7 L365.7 397.5 L368.3 399.3 L370.9 401.1 L373.5 402.9 L376.1 404.7 L378.7 406.5 L381.3 408.3 L383.9 410.2 L386.6 412.0 L389.2 413.9 L391.8 415.8 L394.4 417.8 L397.0 419.7 L399.6 421.6 L402.2 423.6 L404.8 425.6 L407.4 427.6 L410.1 429.6 L412.7 431.6 L415.3 433.7 L417.9 435.7 L420.5 437.8 L423.1 439.8 L425.7 441.8 L428.3 443.9 L431.0 445.9 L433.6 447.9 L436.2 449.9 L438.8 451.9 L441.4 453.9 L444.0 455.8 L446.6 457.8 L449.2 459.6 L451.8 461.5 L454.5 463.3 L457.1 465.1 L459.7 466.8 L462.3 468.5 L464.9 470.2 L467.5 471.8 L470.1 473.4 L472.7 474.9 L475.4 476.4 L478.0 477.8 L480.6 479.2 L483.2 480.6 L485.8 481.9 L488.4 483.1 L491.0 484.3 L493.6 485.5 L496.2 486.6 L498.9 487.7 L501.5 488.8 L504.1 489.8 L506.7 490.7 L509.3 491.6 L511.9 492.5 L514.5 493.4 L517.1 494.2 L519.8 495.0 L522.4 495.7 L525.0 496.4 L527.6 497.1 L530.2 497.8 L532.8 498.4 L535.4 499.0 L538.0 499.6 L540.6 500.2 L543.3 500.7 L545.9 501.2 L548.5 501.7 L551.1 502.1 L553.7 502.6 L556.3 503.0 L558.9 503.4 L561.5 503.8 L564.2 504.2 L566.8 504.5 L569.4 504.9 L572.0 505.2 L574.6 505.5 L577.2 505.8 L579.8 506.1 L582.4 506.3 L585.1 506.6 L587.7 506.8 L590.3 507.1 L592.9 507.3 L595.5 507.5 L598.1 507.7 L600.7 507.9 L603.3 508.1 L605.9 508.3 L608.6 508.4 L611.2 508.6 L613.8 508.8 L616.4 508.9 L619.0 509.0 L621.6 509.2 L624.2 509.3 L626.8 509.4 L629.5 509.6 L632.1 509.7 L634.7 509.8 L637.3 509.9 L639.9 510.0 L642.5 510.1 L645.1 510.2 L647.7 510.2 L650.3 510.3 L653.0 510.4 L655.6 510.5 L658.2 510.5 L660.8 510.6 L663.4 510.7 L666.0 510.7 L668.6 510.8 L671.2 510.9 L673.9 510.9 L676.5 511.0 L679.1 511.0 L681.7 511.1 L684.3 511.1 L686.9 511.1 L689.5 511.2 L692.1 511.2 L694.7 511.3 L697.4 511.3 L700.0 511.3 L702.6 511.4 L705.2 511.4 L707.8 511.4 L710.4 511.5 L713.0 511.5 L715.6 511.5 L718.3 511.5 L720.9 511.6 L723.5 511.6 L726.1 511.6 L728.7 511.6 L731.3 511.6 L733.9 511.7 L736.5 511.7 L739.1 511.7 L741.8 511.7 L744.4 511.7 L747.0 511.7 L749.6 511.8 L752.2 511.8 L754.8 511.8 L757.4 511.8 L760.0 511.8 L762.7 511.8 L765.3 511.8 L767.9 511.8 L770.5 511.8 L773.1 511.9 L775.7 511.9 L778.3 511.9 L780.9 511.9 L783.6 511.9 L786.2 511.9 L788.8 511.9 L791.4 511.9 L794.0 511.9 L796.6 511.9 L799.2 511.9 L801.8 511.9 L804.4 511.9 L807.1 512.0 L809.7 512.0 L812.3 512.0 L814.9 512.0 L817.5 512.0 L820.1 512.0 L822.7 512.0 L825.3 512.0 L828.0 512.0 L830.6 512.0 L833.2 512.0 L835.8 512.0 L838.4 512.0 L841.0 512.0 L843.6 512.0 L846.2 512.0 L848.8 512.0 L851.5 512.0 L854.1 512.0 L856.7 512.0 L859.3 512.0 L861.9 512.0 L864.5 512.0 L867.1 512.0 L869.7 512.0 L869.7 27.0 L872.4 27.0 L875.0 27.0 L877.6 27.0 L880.2 27.0 L882.8 27.0 L885.4 27.0 L888.0 27.0 L890.6 27.0 L893.2 27.0 L895.9 27.0 L898.5 27.0 L901.1 27.0 L903.7 27.0 L906.3 27.0 L908.9 27.0 L911.5 27.0 L914.1 27.0 L916.8 27.0 L919.4 27.0 L922.0 27.0 L924.6 27.0 L927.2 27.0 L929.8 27.0 L932.4 27.1 L935.0 27.1 L937.6 27.1 L940.3 27.1 L942.9 27.1 L945.5 27.1 L948.1 27.1 L950.7 27.1 L953.3 27.1 L955.9 27.1 L958.5 27.1 L961.2 27.1 L963.8 27.1 L966.4 27.1 L969.0 27.2 L971.6 27.2 L974.2 27.2 L976.8 27.2 L979.4 27.2 L982.0 27.2 L984.7 27.2 L987.3 27.2 L989.9 27.3 L992.5 27.3 L995.1 27.3 L997.7 27.3 L1000.3 27.3 L1002.9 27.3 L1005.6 27.4 L1008.2 27.4 L1010.8 27.4 L1013.4 27.4 L1016.0 27.4 L1018.6 27.5 L1021.2 27.5 L1023.8 27.5 L1026.5 27.5 L1029.1 27.6 L1031.7 27.6 L1034.3 27.6 L1036.9 27.7 L1039.5 27.7 L1042.1 27.7 L1044.7 27.8 L1047.3 27.8 L1050.0 27.8 L1052.6 27.9 L1055.2 27.9 L1057.8 28.0 L1060.4 28.0 L1063.0 28.1 L1065.6 28.1 L1068.2 28.2 L1070.9 28.2 L1073.5 28.3 L1076.1 28.4 L1078.7 28.4 L1081.3 28.5 L1083.9 28.6 L1086.5 28.7 L1089.1 28.7 L1091.7 28.8 L1094.4 28.9 L1097.0 29.0 L1099.6 29.1 L1102.2 29.2 L1104.8 29.3 L1107.4 29.4 L1110.0 29.5 L1112.6 29.7 L1115.3 29.8 L1117.9 29.9 L1120.5 30.1 L1123.1 30.2 L1125.7 30.4 L1128.3 30.5 L1130.9 30.7 L1133.5 30.9 L1136.1 31.1 L1138.8 31.2 L1141.4 31.5 L1144.0 31.7 L1146.6 31.9 L1149.2 32.1 L1151.8 32.4 L1154.4 32.6 L1157.0 32.9 L1159.7 33.2 L1162.3 33.5 L1164.9 33.8 L1167.5 34.1 L1170.1 34.4 L1172.7 34.8 L1175.3 35.1 L1177.9 35.5 L1180.5 35.9 L1183.2 36.3 L1185.8 36.8 L1188.4 37.2 L1191.0 37.7 L1193.6 38.2 L1196.2 38.8 L1198.8 39.3 L1201.4 39.9 L1204.1 40.5 L1206.7 41.1 L1209.3 41.8 L1211.9 42.5 L1214.5 43.2 L1217.1 44.0 L1219.7 44.8 L1222.3 45.6 L1224.9 46.5 L1227.6 47.4 L1230.2 48.4 L1232.8 49.4 L1235.4 50.4 L1238.0 51.5 L1240.6 52.6 L1243.2 53.8 L1245.8 55.0 L1248.5 56.3 L1251.1 57.7 L1253.7 59.1 L1256.3 60.6 L1258.9 62.1 L1261.5 63.7 L1264.1 65.3 L1266.7 67.1 L1269.4 68.9 L1272.0 70.8 L1274.6 72.7 L1277.2 74.7 L1279.8 76.8 L1282.4 79.0 L1285.0 81.3 L1287.6 83.6 L1290.2 86.0 L1292.9 88.5 L1295.5 91.1 L1298.1 93.8 L1300.7 96.5 L1303.3 99.4 L1305.9 102.3 L1308.5 105.2 L1311.1 108.3 L1313.8 111.4 L1316.4 114.6 L1319.0 117.9 L1321.6 121.2 L1324.2 124.6 L1326.8 128.0 L1329.4 131.4 L1332.0 134.9 L1334.6 138.4 L1337.3 142.0 L1339.9 145.5 L1342.5 149.1 L1345.1 152.6 L1347.7 156.2 L1350.3 159.7 L1352.9 163.2 L1355.5 166.7 L1358.2 170.1 L1360.8 173.5 L1363.4 176.8 L1366.0 180.1 L1368.6 183.3 L1371.2 186.5 L1373.8 189.6 L1376.4 192.6 L1379.0 195.6 L1381.7 198.4 L1384.3 201.2 L1386.9 203.9 L1389.5 206.6 L1392.1 209.1 L1394.7 211.6 L1397.3 214.0 L1399.9 216.3 L1402.6 218.5 L1405.2 220.6 L1407.8 222.7 L1410.4 224.7 L1413.0 226.6 L1415.6 228.4 L1418.2 230.2 L1420.8 231.9 L1423.4 233.5 L1426.1 235.1 L1428.7 236.6 L1431.3 238.0 L1433.9 239.4 L1436.5 240.7 L1439.1 242.0 L1441.7 243.2 L1444.3 244.4 L1447.0 245.5 L1449.6 246.6 L1452.2 247.6 L1454.8 248.5 L1457.4 249.5 L1460.0 250.4 L1462.6 251.2 L1465.2 252.0 L1467.9 252.8 L1470.5 253.6 L1473.1 254.3 L1475.7 255.0 L1478.3 255.6 L1480.9 256.2 L1483.5 256.8 L1486.1 257.4 L1488.7 257.9 L1491.4 258.5 L1494.0 258.9 L1496.6 259.4 L1499.2 259.9 L1501.8 260.3 L1504.4 260.7 L1507.0 261.1 L1509.6 261.5 L1512.3 261.9 L1514.9 262.2 L1517.5 262.5 L1520.1 262.8 L1522.7 263.1 L1525.3 263.4 L1527.9 263.7 L1530.5 264.0 L1533.1 264.2 L1535.8 264.4 L1538.4 264.7 L1541.0 264.9 L1543.6 265.1 L1546.2 265.3 L1548.8 265.5 L1551.4 265.7 L1554.0 265.8 L1556.7 266.0 L1559.3 266.2 L1561.9 266.3 L1564.5 266.5 L1567.1 266.6" fill="none" stroke="#ffffff" stroke-width="4.0" stroke-linejoin="miter"/><line x1="0.8" y1="0" x2="0.8" y2="539.0" stroke="#555" stroke-width="1.6"/><line x1="0" y1="0.8" x2="1567.1" y2="0.8" stroke="#555" stroke-width="1.6"/></svg>
<div style="position:absolute;left:1932.5px;top:1574.0px;width:1567.1px;height:2.0px;background:#e8e8e8"></div>
<div style="position:absolute;left:1919.5px;top:1034.0px;width:10.0px;height:2.0px;background:#111"></div>
<div style="position:absolute;left:915.0px;top:1025.8px;width:1000px;height:27.9px;line-height:27.9px;text-align:right;white-space:nowrap;font-family:'Liberation Mono', monospace;font-weight:normal;font-size:24.6px;color:#111;">200</div>
<div style="position:absolute;left:1919.5px;top:1101.4px;width:10.0px;height:2.0px;background:#111"></div>
<div style="position:absolute;left:915.0px;top:1093.2px;width:1000px;height:27.9px;line-height:27.9px;text-align:right;white-space:nowrap;font-family:'Liberation Mono', monospace;font-weight:normal;font-size:24.6px;color:#111;">150</div>
<div style="position:absolute;left:1919.5px;top:1168.8px;width:10.0px;height:2.0px;background:#111"></div>
<div style="position:absolute;left:915.0px;top:1160.6px;width:1000px;height:27.9px;line-height:27.9px;text-align:right;white-space:nowrap;font-family:'Liberation Mono', monospace;font-weight:normal;font-size:24.6px;color:#111;">100</div>
<div style="position:absolute;left:1919.5px;top:1236.1px;width:10.0px;height:2.0px;background:#111"></div>
<div style="position:absolute;left:915.0px;top:1227.9px;width:1000px;height:27.9px;line-height:27.9px;text-align:right;white-space:nowrap;font-family:'Liberation Mono', monospace;font-weight:normal;font-size:24.6px;color:#111;">50</div>
<div style="position:absolute;left:1919.5px;top:1303.5px;width:10.0px;height:2.0px;background:#111"></div>
<div style="position:absolute;left:915.0px;top:1295.3px;width:1000px;height:27.9px;line-height:27.9px;text-align:right;white-space:nowrap;font-family:'Liberation Mono', monospace;font-weight:normal;font-size:24.6px;color:#111;">0</div>
<div style="position:absolute;left:1919.5px;top:1370.9px;width:10.0px;height:2.0px;background:#111"></div>
<div style="position:absolute;left:915.0px;top:1362.7px;width:1000px;height:27.9px;line-height:27.9px;text-align:right;white-space:nowrap;font-family:'Liberation Mono', monospace;font-weight:normal;font-size:24.6px;color:#111;">&minus;50</div>
<div style="position:absolute;left:1919.5px;top:1438.2px;width:10.0px;height:2.0px;background:#111"></div>
<div style="position:absolute;left:915.0px;top:1430.1px;width:1000px;height:27.9px;line-height:27.9px;text-align:right;white-space:nowrap;font-family:'Liberation Mono', monospace;font-weight:normal;font-size:24.6px;color:#111;">&minus;100</div>
<div style="position:absolute;left:1919.5px;top:1505.6px;width:10.0px;height:2.0px;background:#111"></div>
<div style="position:absolute;left:915.0px;top:1497.4px;width:1000px;height:27.9px;line-height:27.9px;text-align:right;white-space:nowrap;font-family:'Liberation Mono', monospace;font-weight:normal;font-size:24.6px;color:#111;">&minus;150</div>
<div style="position:absolute;left:1919.5px;top:1573.0px;width:10.0px;height:2.0px;background:#111"></div>
<div style="position:absolute;left:915.0px;top:1564.8px;width:1000px;height:27.9px;line-height:27.9px;text-align:right;white-space:nowrap;font-family:'Liberation Mono', monospace;font-weight:normal;font-size:24.6px;color:#111;">&minus;200</div>
<div style="position:absolute;left:1931.5px;top:1577.8px;width:2.0px;height:9.0px;background:#111"></div>
<div style="position:absolute;left:932.5px;top:1593.3px;width:2000px;height:27.9px;line-height:27.9px;text-align:center;white-space:nowrap;font-family:'Liberation Mono', monospace;font-weight:normal;font-size:24.6px;color:#111;">0.0</div>
<div style="position:absolute;left:2062.1px;top:1577.8px;width:2.0px;height:9.0px;background:#111"></div>
<div style="position:absolute;left:1063.1px;top:1593.3px;width:2000px;height:27.9px;line-height:27.9px;text-align:center;white-space:nowrap;font-family:'Liberation Mono', monospace;font-weight:normal;font-size:24.6px;color:#111;">0.1</div>
<div style="position:absolute;left:2192.7px;top:1577.8px;width:2.0px;height:9.0px;background:#111"></div>
<div style="position:absolute;left:1193.7px;top:1593.3px;width:2000px;height:27.9px;line-height:27.9px;text-align:center;white-space:nowrap;font-family:'Liberation Mono', monospace;font-weight:normal;font-size:24.6px;color:#111;">1.0</div>
<div style="position:absolute;left:2323.3px;top:1577.8px;width:2.0px;height:9.0px;background:#111"></div>
<div style="position:absolute;left:1324.3px;top:1593.3px;width:2000px;height:27.9px;line-height:27.9px;text-align:center;white-space:nowrap;font-family:'Liberation Mono', monospace;font-weight:normal;font-size:24.6px;color:#111;">10.0</div>
<div style="position:absolute;left:2453.9px;top:1577.8px;width:2.0px;height:9.0px;background:#111"></div>
<div style="position:absolute;left:1454.9px;top:1593.3px;width:2000px;height:27.9px;line-height:27.9px;text-align:center;white-space:nowrap;font-family:'Liberation Mono', monospace;font-weight:normal;font-size:24.6px;color:#111;">1.0E+2</div>
<div style="position:absolute;left:2584.5px;top:1577.8px;width:2.0px;height:9.0px;background:#111"></div>
<div style="position:absolute;left:1585.5px;top:1593.3px;width:2000px;height:27.9px;line-height:27.9px;text-align:center;white-space:nowrap;font-family:'Liberation Mono', monospace;font-weight:normal;font-size:24.6px;color:#111;">1.0E+3</div>
<div style="position:absolute;left:2715.0px;top:1577.8px;width:2.0px;height:9.0px;background:#111"></div>
<div style="position:absolute;left:1716.0px;top:1593.3px;width:2000px;height:27.9px;line-height:27.9px;text-align:center;white-space:nowrap;font-family:'Liberation Mono', monospace;font-weight:normal;font-size:24.6px;color:#111;">1.0E+4</div>
<div style="position:absolute;left:2845.6px;top:1577.8px;width:2.0px;height:9.0px;background:#111"></div>
<div style="position:absolute;left:1846.6px;top:1593.3px;width:2000px;height:27.9px;line-height:27.9px;text-align:center;white-space:nowrap;font-family:'Liberation Mono', monospace;font-weight:normal;font-size:24.6px;color:#111;">1.0E+5</div>
<div style="position:absolute;left:2976.2px;top:1577.8px;width:2.0px;height:9.0px;background:#111"></div>
<div style="position:absolute;left:1977.2px;top:1593.3px;width:2000px;height:27.9px;line-height:27.9px;text-align:center;white-space:nowrap;font-family:'Liberation Mono', monospace;font-weight:normal;font-size:24.6px;color:#111;">1.0E+6</div>
<div style="position:absolute;left:3106.8px;top:1577.8px;width:2.0px;height:9.0px;background:#111"></div>
<div style="position:absolute;left:2107.8px;top:1593.3px;width:2000px;height:27.9px;line-height:27.9px;text-align:center;white-space:nowrap;font-family:'Liberation Mono', monospace;font-weight:normal;font-size:24.6px;color:#111;">1.0E+7</div>
<div style="position:absolute;left:3237.4px;top:1577.8px;width:2.0px;height:9.0px;background:#111"></div>
<div style="position:absolute;left:2238.4px;top:1593.3px;width:2000px;height:27.9px;line-height:27.9px;text-align:center;white-space:nowrap;font-family:'Liberation Mono', monospace;font-weight:normal;font-size:24.6px;color:#111;">1.0E+8</div>
<div style="position:absolute;left:3368.0px;top:1577.8px;width:2.0px;height:9.0px;background:#111"></div>
<div style="position:absolute;left:2369.0px;top:1593.3px;width:2000px;height:27.9px;line-height:27.9px;text-align:center;white-space:nowrap;font-family:'Liberation Mono', monospace;font-weight:normal;font-size:24.6px;color:#111;">1.0E+9</div>
<div style="position:absolute;left:3498.6px;top:1577.8px;width:2.0px;height:9.0px;background:#111"></div>
<div style="position:absolute;left:2499.6px;top:1593.3px;width:2000px;height:27.9px;line-height:27.9px;text-align:center;white-space:nowrap;font-family:'Liberation Mono', monospace;font-weight:normal;font-size:24.6px;color:#111;">1.0E+10</div>
<div style="position:absolute;left:1711.4px;top:1628.7px;width:2000px;height:38.5px;line-height:38.5px;text-align:center;white-space:nowrap;font-family:'Liberation Mono', monospace;font-weight:bold;font-size:34.0px;color:#ff0a10;letter-spacing:4.90px;padding-left:4.90px;box-sizing:border-box">Frequency [Hz]</div>
<div style="position:absolute;left:1529.2px;top:1279.8px;width:600px;height:50px;line-height:50px;text-align:center;font-family:'Liberation Mono',monospace;font-weight:bold;font-size:34px;color:#ff0a10;white-space:nowrap;letter-spacing:4.90px;padding-left:4.90px;box-sizing:border-box;transform:rotate(-90deg);transform-origin:300px 25px">Phase [degrees]</div>
<div style="position:absolute;left:3159.0px;top:976.0px;width:400px;height:134px;background:#c0c0c0;border-top:2px solid #d2d2d2"><div style="position:absolute;left:0;top:0;bottom:0;width:24px;background:linear-gradient(to right,#c8c8c8,#d6d6d6 50%,#c4c4c4)"></div><div style="position:absolute;right:0;top:0;bottom:0;width:22px;background:linear-gradient(to right,#c0c0c0,#8a8a8a 85%,#606060)"></div></div>
<div style="position:absolute;left:3190.8px;top:983.2px;height:26.4px;line-height:26.4px;white-space:nowrap;font-family:'Liberation Sans', sans-serif;font-weight:normal;font-size:23.6px;color:#111;">Phase</div>
<svg style="position:absolute;left:3476.0px;top:980.0px" width="55" height="35" viewBox="0 0 55 35"><rect x="0" y="0" width="55" height="35" fill="#000"/><path d="M8 30 L8 6 L30 6 L30 26 L47 26 L47 6" fill="none" stroke="#ffffff" stroke-width="3.5"/></svg>
<div style="position:absolute;left:3190.8px;top:1028.0px;height:26.4px;line-height:26.4px;white-space:nowrap;font-family:'Liberation Sans', sans-serif;font-weight:normal;font-size:23.6px;color:#111;">Stability domain</div>
<svg style="position:absolute;left:3476.0px;top:1025.3px" width="55" height="35" viewBox="0 0 55 35"><rect x="0" y="0" width="55" height="35" fill="#000"/><path d="M8 31 L8 9 L32 9 L32 28 L48 28" fill="none" stroke="#ff4040" stroke-width="3.5"/></svg>
<div style="position:absolute;left:3190.8px;top:1072.8px;height:26.4px;line-height:26.4px;white-space:nowrap;font-family:'Liberation Sans', sans-serif;font-weight:normal;font-size:23.6px;color:#111;">Pozition</div>
<svg style="position:absolute;left:3476.0px;top:1070.6px" width="55" height="35" viewBox="0 0 55 35"><rect x="0" y="0" width="55" height="35" fill="#000"/><path d="M8 31 L8 9 L32 9 L32 28 L48 28" fill="none" stroke="#00ff00" stroke-width="3.5"/></svg>
</div></body></html>
